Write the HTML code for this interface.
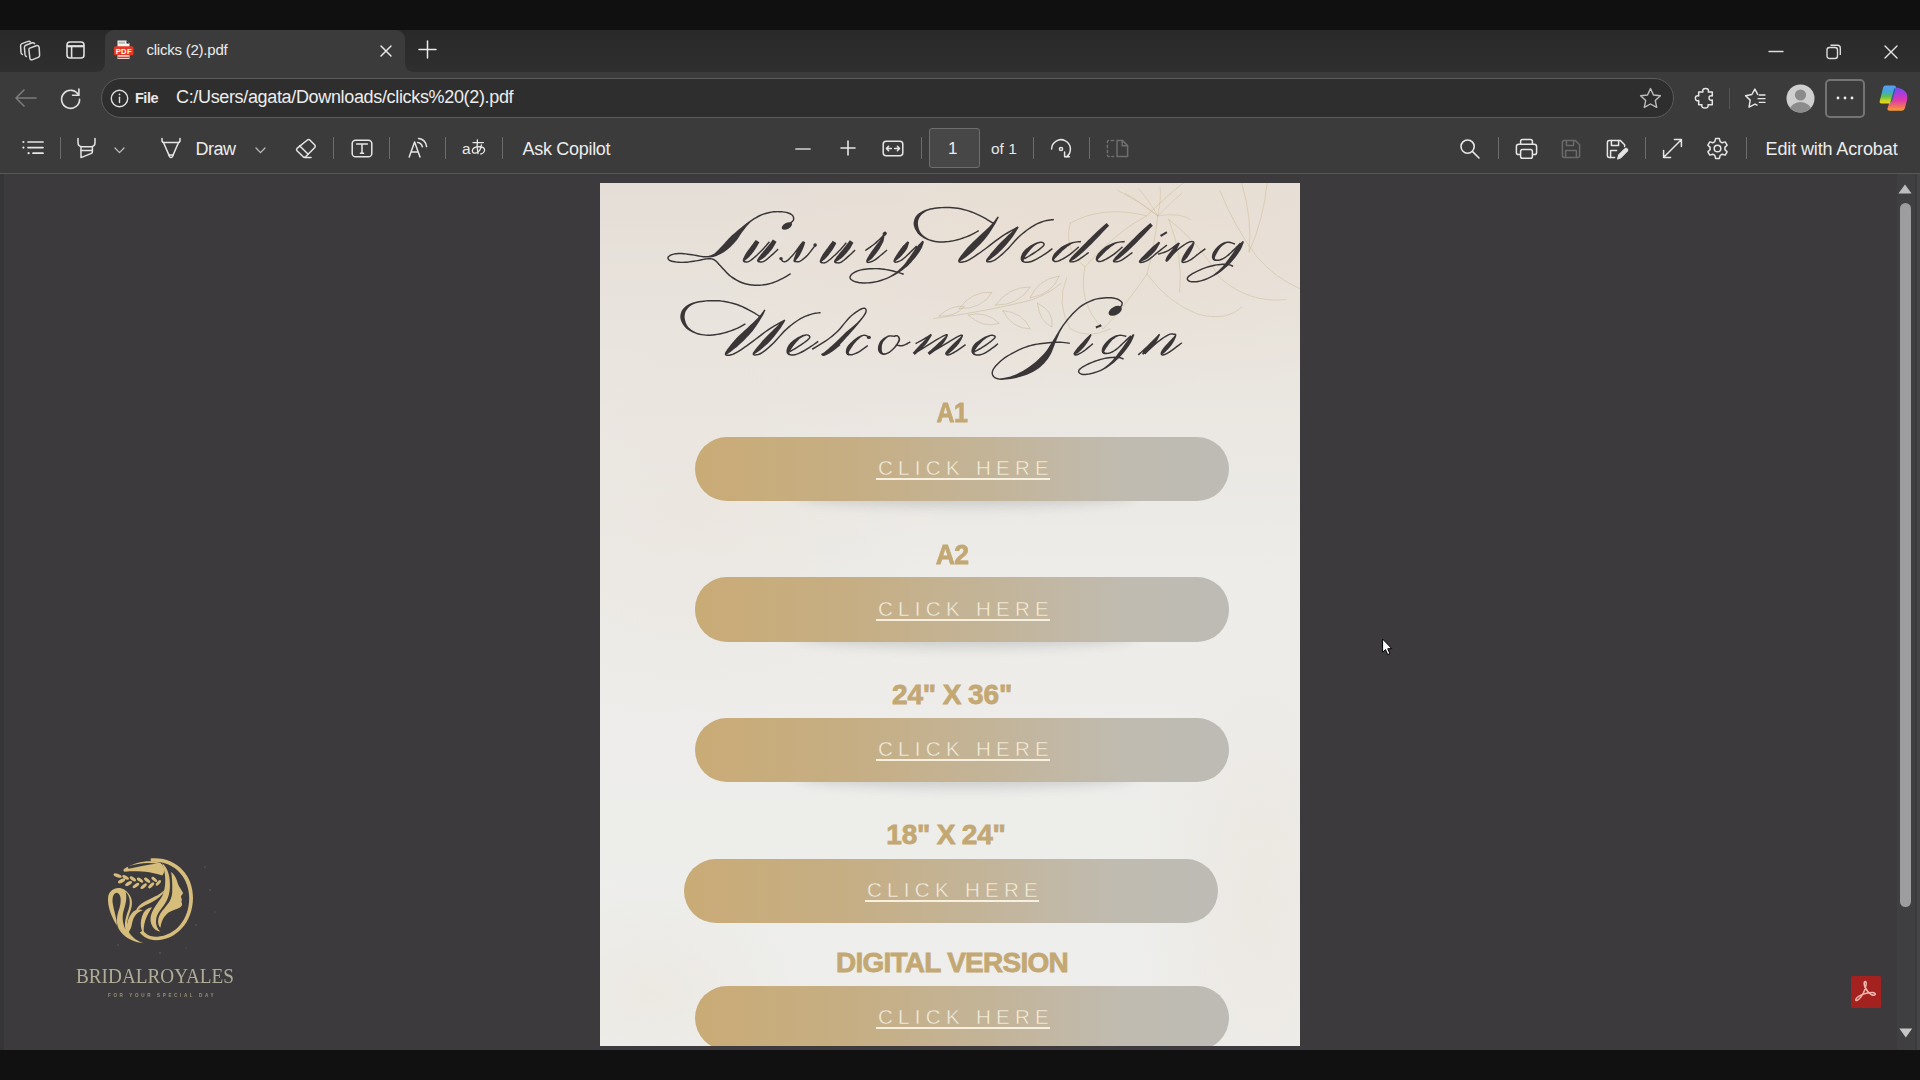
<!DOCTYPE html>
<html>
<head>
<meta charset="utf-8">
<title>clicks (2).pdf</title>
<style>
*{box-sizing:border-box;margin:0;padding:0}
html,body{width:1920px;height:1080px;overflow:hidden;background:#101010;font-family:"Liberation Sans",sans-serif;}
.abs{position:absolute}
#top{left:0;top:0;width:1920px;height:30px;background:#101010}
#tabstrip{left:0;top:30px;width:1920px;height:42px;background:linear-gradient(180deg,#292929,#2f2f2f)}
#tab{left:105px;top:30px;width:300px;height:42px;background:#3b3b3b;border-radius:9px 9px 0 0}
#addr{left:0;top:72px;width:1920px;height:50px;background:#3b3b3b}
#pill{left:101px;top:78px;width:1573px;height:40px;border-radius:20px;background:#2e2e2e;border:1px solid #5c5c5c}
#pdfbar{left:0;top:122px;width:1920px;height:52px;background:#3b3b3b;border-bottom:1px solid #585858}
#content{left:0;top:174px;width:1920px;height:876px;background:#3c3a3d;overflow:hidden}
#bottom{left:0;top:1050px;width:1920px;height:30px;background:#111111}
.t{position:absolute;white-space:nowrap;color:#e6e6e6;line-height:1}
.sep{position:absolute;width:1px;background:#6c6c6c;top:137px;height:22px}
svg{position:absolute;overflow:visible}
#page{left:600px;top:183px;width:700px;height:863px;background:#e8e4df;overflow:hidden}
.btn{position:absolute;height:64px;border-radius:32px;background:linear-gradient(90deg,#c9ab76 0%,#c6ae84 30%,#c3b498 55%,#c0bbb0 80%,#bdbbb5 100%)}
.lbl{position:absolute;white-space:nowrap;font-weight:bold;color:#c3a873;-webkit-text-stroke:0.8px #c3a873;line-height:1;text-align:center}
.ch{position:absolute;white-space:nowrap;color:rgba(250,243,226,0.97);-webkit-text-stroke:0.5px #c4b292;line-height:1;font-size:20.6px;letter-spacing:5.25px}
.shd{position:absolute;width:340px;height:24px;margin-left:20px;border-radius:50%;background:rgba(120,128,128,0.26);filter:blur(6px)}
.ul{position:absolute;height:1.4px;background:#f8f0de}
</style>
</head>
<body>
<div id="top" class="abs"></div>
<div id="tabstrip" class="abs"></div>
<div id="tab" class="abs"></div>
<div id="addr" class="abs"></div>
<div id="pill" class="abs"></div>
<div id="pdfbar" class="abs"></div>
<div id="content" class="abs"></div>
<div id="page" class="abs"></div>
<div id="bottom" class="abs"></div>
<!-- ===== TAB STRIP ===== -->
<svg style="left:405px;top:62px" width="10" height="10"><path d="M0 0 Q0 10 10 10 L0 10 Z" fill="#3b3b3b"/></svg>
<svg style="left:95px;top:62px" width="10" height="10"><path d="M10 0 Q10 10 0 10 L10 10 Z" fill="#3b3b3b"/></svg>
<!-- workspaces icon -->
<svg style="left:19px;top:39px" width="24" height="24" viewBox="0 0 24 24" fill="none" stroke="#d8d8d8" stroke-width="1.5" stroke-linejoin="round" stroke-linecap="round">
<path d="M10.2 9.4 L17.2 6.8 Q19.8 6 20.2 8.6 L20.6 16.2 Q20.7 17.8 19.2 18.4 L13.6 20.6 Q11 21.4 10.8 18.8 L10 11.4 Q9.8 9.9 10.2 9.4 Z"/>
<path d="M7.4 17.6 Q6.2 17.2 6 15.4 L5.4 8.6 Q5.2 6.8 6.8 6.2 L13.2 3.8 Q14.8 3.4 15.6 4.6"/>
<path d="M3.4 15.4 Q2.2 15 2 13.4 L1.6 7 Q1.4 5.2 3 4.6 L9.2 2.4 Q10.6 2 11.4 3"/>
</svg>
<!-- tab actions icon -->
<svg style="left:66px;top:41px" width="19" height="18" viewBox="0 0 19 18" fill="none" stroke="#e0e0e0" stroke-width="1.6">
<rect x="1" y="1" width="17" height="16" rx="3"/><path d="M1 5.2 H18" stroke-width="2.2"/><path d="M5.6 5 V17"/>
</svg>
<!-- pdf favicon -->
<svg style="left:113px;top:40px" width="22" height="20" viewBox="0 0 22 20">
<path d="M4.5 0.5 H13.5 L16.5 3.5 V19 H4.5 Z" fill="#f4f4f4"/>
<path d="M13.5 0.5 V3.5 H16.5 Z" fill="#1a1a1a"/>
<rect x="5.5" y="1.6" width="6.5" height="2.2" fill="#b9b9b9"/>
<rect x="1" y="6.3" width="19.5" height="9" rx="1.6" fill="#e23a24"/>
<rect x="4.5" y="16.6" width="12" height="1.6" fill="#e23a24"/>
<text x="10.8" y="13.6" font-family="Liberation Sans" font-weight="bold" font-size="7.6" fill="#fff" text-anchor="middle" letter-spacing="0.3">PDF</text>
</svg>
<div class="t" id="tabtitle" style="left:146.5px;top:41.8px;font-size:15px;letter-spacing:-0.23px;color:#ececec">clicks (2).pdf</div>
<!-- tab close -->
<svg style="left:380px;top:45px" width="12" height="12" viewBox="0 0 12 12" stroke="#e8e8e8" stroke-width="1.5" stroke-linecap="round"><path d="M1 1 L11 11 M11 1 L1 11"/></svg>
<!-- new tab plus -->
<svg style="left:418px;top:40px" width="19" height="19" viewBox="0 0 19 19" stroke="#ececec" stroke-width="1.5" stroke-linecap="round"><path d="M9.5 1 V18 M1 9.5 H18"/></svg>
<!-- window controls -->
<svg style="left:1768px;top:50px" width="16" height="4" viewBox="0 0 16 4" stroke="#dcdcdc" stroke-width="1.4" stroke-linecap="round"><path d="M1 1.5 H15"/></svg>
<svg style="left:1826px;top:44px" width="16" height="16" viewBox="0 0 16 16" fill="none" stroke="#dcdcdc" stroke-width="1.4" stroke-linejoin="round"><rect x="1" y="3.5" width="10.5" height="11" rx="2.5"/><path d="M4.5 1.2 H11.5 Q14.3 1.2 14.3 4 V11"/></svg>
<svg style="left:1884px;top:45px" width="14" height="14" viewBox="0 0 14 14" stroke="#e6e6e6" stroke-width="1.4" stroke-linecap="round"><path d="M1 1 L13 13 M13 1 L1 13"/></svg>

<!-- ===== ADDRESS BAR ===== -->
<svg style="left:14px;top:88px" width="24" height="20" viewBox="0 0 24 20" fill="none" stroke="#7c7c7c" stroke-width="1.6" stroke-linecap="round" stroke-linejoin="round"><path d="M22 10 H2 M10 2 L2 10 L10 18"/></svg>
<svg style="left:59px;top:86px" width="24" height="24" viewBox="0 0 24 24" fill="none" stroke="#e0e0e0" stroke-width="1.6" stroke-linecap="round" stroke-linejoin="round"><path d="M19.6 9.2 A9 9 0 1 0 20.6 13.2"/><path d="M19.9 3 V9.3 H13.6"/></svg>
<svg style="left:110px;top:89px" width="19" height="19" viewBox="0 0 19 19" fill="none" stroke="#e0e0e0" stroke-width="1.4"><circle cx="9.5" cy="9.5" r="8.2"/><path d="M9.5 8.2 V13.6" stroke-linecap="round"/><circle cx="9.5" cy="5.4" r="0.9" fill="#e0e0e0" stroke="none"/></svg>
<div class="t" id="filelbl" style="left:135px;top:91px;font-size:14.5px;letter-spacing:-0.5px;font-weight:bold;color:#e8e8e8">File</div>
<div class="t" id="url" style="left:176px;top:88px;font-size:18px;letter-spacing:-0.34px;color:#ededed">C:/Users/agata/Downloads/clicks%20(2).pdf</div>
<!-- star -->
<svg style="left:1639px;top:87px" width="23" height="22" viewBox="0 0 23 22" fill="none" stroke="#bdbdbd" stroke-width="1.4" stroke-linejoin="round"><path d="M11.5 1.6 L14.5 8 L21.4 8.8 L16.3 13.6 L17.7 20.4 L11.5 17 L5.3 20.4 L6.7 13.6 L1.6 8.8 L8.5 8 Z"/></svg>
<!-- extensions puzzle -->
<svg style="left:0;top:0" width="1920" height="130" viewBox="0 0 1920 130"><g transform="translate(1685,78) scale(0.04688)" fill="none" stroke="#e6e6e6" stroke-width="32" stroke-linejoin="round"><path d="M292 300 H382 Q366 222 440 222 Q514 222 498 300 H582 V382 Q512 366 512 426 Q512 486 582 470 V572 H492 Q506 640 426 640 Q346 640 360 572 H292 V482 Q222 496 222 432 Q222 368 292 382 Z"/></g></svg>
<div class="sep" style="left:1729px;top:88px;height:21px;background:#555"></div>
<!-- favorites -->
<svg style="left:0;top:0" width="1920" height="130" viewBox="0 0 1920 130"><g transform="translate(1685,78) scale(0.04688)" fill="none" stroke="#e6e6e6" stroke-width="31" stroke-linejoin="round" stroke-linecap="round"><path d="M1550 350 L1490 236 L1426 352 L1292 378 L1390 472 L1366 622 L1494 556 L1536 580"/><path d="M1585 362 H1705 M1560 440 H1705 M1585 520 H1705"/></g></svg>
<!-- profile -->
<svg style="left:1786px;top:84px" width="29" height="29" viewBox="0 0 29 29"><defs><clipPath id="pc"><circle cx="14.5" cy="14.5" r="14"/></clipPath></defs><circle cx="14.5" cy="14.5" r="14" fill="#cfcfcf"/><g clip-path="url(#pc)"><circle cx="14.5" cy="11" r="5.6" fill="#8b8b8b"/><ellipse cx="14.5" cy="27" rx="11" ry="9" fill="#8b8b8b"/></g></svg>
<!-- more box -->
<div class="abs" style="left:1825px;top:79px;width:40px;height:39px;border:2px solid #747474;border-radius:5px;background:#3b3b3b"></div>
<svg style="left:1836px;top:96px" width="18" height="4" viewBox="0 0 18 4" fill="#ececec"><circle cx="2" cy="2" r="1.4"/><circle cx="9" cy="2" r="1.4"/><circle cx="16" cy="2" r="1.4"/></svg>
<!-- copilot -->
<svg style="left:0;top:0" width="1920" height="130" viewBox="0 0 1920 130">
<defs>
<linearGradient id="cgl" x1="0" y1="0" x2="0" y2="1"><stop offset="0" stop-color="#5b9df0"/><stop offset="0.35" stop-color="#3fa6d8"/><stop offset="0.6" stop-color="#5cbf52"/><stop offset="0.85" stop-color="#c9d421"/><stop offset="1" stop-color="#ecd51f"/></linearGradient>
<linearGradient id="cgr" x1="0" y1="0" x2="0" y2="1"><stop offset="0" stop-color="#6c4fe6"/><stop offset="0.3" stop-color="#b53ad8"/><stop offset="0.55" stop-color="#e03aa8"/><stop offset="0.78" stop-color="#ee6a6a"/><stop offset="1" stop-color="#f7a02c"/></linearGradient>
</defs>
<path d="M1896.2 87.6 Q1904 88.6 1906.6 93.6 Q1908 96.4 1907.2 99.6 L1904.8 108.4 Q1904 110.8 1901.4 110.8 H1889.6 Q1886.8 110.8 1887.6 108 L1889.6 101.6 L1893.6 88.4 Z" fill="url(#cgr)"/>
<path d="M1885.4 85.4 H1893.8 Q1896.4 85.4 1895.8 88 L1892.2 101.6 Q1891.6 103.4 1889.6 103.4 H1881.6 Q1879 103.4 1879.8 100.8 L1883.2 87.2 Q1883.8 85.4 1885.4 85.4 Z" fill="url(#cgl)"/>
<path d="M1895.6 88.8 L1892.2 101.8 L1890 103.2 L1894.4 88 Z" fill="#2a3aa8" opacity="0.75"/>
</svg>
<!-- ===== PDF TOOLBAR ===== -->
<!-- contents -->
<svg style="left:21px;top:139px" width="24" height="18" viewBox="0 0 24 18" stroke="#e6e6e6" stroke-width="1.7" stroke-linecap="round" fill="#e6e6e6"><circle cx="2.4" cy="3" r="1.1" stroke="none"/><circle cx="2.4" cy="8.6" r="1.1" stroke="none"/><circle cx="7.6" cy="14.2" r="1.1" stroke="none"/><path d="M7 3 H22 M7 8.6 H22 M12 14.2 H22"/></svg>
<div class="sep" style="left:60px"></div>
<!-- highlighter -->
<svg style="left:76px;top:137px" width="21" height="23" viewBox="0 0 21 23" fill="none" stroke="#e6e6e6" stroke-width="1.5" stroke-linejoin="round" stroke-linecap="round"><path d="M2 1.6 V5.6 Q2 9.6 6 9.8 H15 Q19 9.6 19 5.6 V1.6"/><path d="M5 10 V20.6 L15.4 16.4 Q16.4 16 16.4 14.8 V10"/><path d="M5 13.6 H16.4"/></svg>
<svg style="left:114px;top:147px" width="11" height="7" viewBox="0 0 11 7" fill="none" stroke="#bdbdbd" stroke-width="1.3" stroke-linecap="round" stroke-linejoin="round"><path d="M1 1 L5.5 5.6 L10 1"/></svg>
<!-- draw -->
<svg style="left:160px;top:137px" width="22" height="23" viewBox="0 0 22 23" fill="none" stroke="#e6e6e6" stroke-width="1.5" stroke-linejoin="round" stroke-linecap="round"><path d="M2 1.6 V3.4 Q2 5.6 4.4 5.6 H17.6 Q20 5.6 20 3.4 V1.6"/><path d="M3.6 5.8 L9.6 19.6 Q11 21.6 12.4 19.6 L18.4 5.8"/><path d="M9 18 H13"/></svg>
<div class="t" id="drawlbl" style="left:195.5px;top:139.6px;font-size:18px;letter-spacing:-0.5px;color:#ececec">Draw</div>
<svg style="left:255px;top:147px" width="11" height="7" viewBox="0 0 11 7" fill="none" stroke="#bdbdbd" stroke-width="1.3" stroke-linecap="round" stroke-linejoin="round"><path d="M1 1 L5.5 5.6 L10 1"/></svg>
<!-- eraser -->
<svg style="left:295px;top:138px" width="22" height="22" viewBox="0 0 22 22" fill="none" stroke="#e6e6e6" stroke-width="1.5" stroke-linejoin="round" stroke-linecap="round"><path d="M12.4 2 Q13.6 1 14.8 2 L19.8 7 Q20.8 8.2 19.8 9.4 L10.6 18.8 Q9.4 19.8 8.2 18.8 L2 12.8 Q1 11.6 2 10.4 Z"/><path d="M4.6 7.8 L13.2 16.2"/><path d="M9.6 19.6 H16"/></svg>
<div class="sep" style="left:333px"></div>
<!-- text box -->
<svg style="left:351px;top:139px" width="22" height="19" viewBox="0 0 22 19" fill="none" stroke="#e6e6e6" stroke-width="1.5" stroke-linejoin="round" stroke-linecap="round"><rect x="1.2" y="1.2" width="19.6" height="16.6" rx="3.4"/><path d="M5.6 5 H16.4 M11 5 V14.2 M9.4 14.2 H12.6"/></svg>
<div class="sep" style="left:389px"></div>
<!-- read aloud -->
<svg style="left:408px;top:137px" width="21" height="22" viewBox="0 0 21 22" fill="none" stroke="#e6e6e6" stroke-width="1.5" stroke-linejoin="round" stroke-linecap="round"><path d="M1.2 20 L6.6 5 L12 20 M3 15 H10.2"/><path d="M9.6 5.4 Q13.4 5.8 14.4 9.8"/><path d="M10.6 1.6 Q17.4 2.4 18.6 9.6"/></svg>
<div class="sep" style="left:445px"></div>
<!-- translate -->
<div class="t" style="left:462px;top:141px;font-size:15.5px;color:#e8e8e8">a</div>
<svg style="left:471px;top:139px" width="15" height="16" viewBox="0 0 15 16" fill="none" stroke="#e8e8e8" stroke-width="1.3" stroke-linecap="round" stroke-linejoin="round"><path d="M2 3.6 H12.4"/><path d="M6.4 0.8 Q5.6 8 7 14.6"/><path d="M10.4 6 Q9.4 13.4 4.2 14.2 Q1 14.2 1.4 11.2 Q2.4 7.8 8 7.6 Q13.4 7.8 13.6 11 Q13.4 14 9.8 15"/></svg>
<div class="sep" style="left:502px"></div>
<div class="t" id="askcop" style="left:522.5px;top:139.6px;font-size:18px;letter-spacing:-0.3px;color:#ececec">Ask Copilot</div>

<!-- zoom -->
<svg style="left:795px;top:147px" width="16" height="4" viewBox="0 0 16 4" stroke="#d4d4d4" stroke-width="1.7" stroke-linecap="round"><path d="M1 2 H15"/></svg>
<svg style="left:840px;top:140px" width="16" height="16" viewBox="0 0 16 16" stroke="#e6e6e6" stroke-width="1.6" stroke-linecap="round"><path d="M8 1 V15 M1 8 H15"/></svg>
<!-- fit width -->
<svg style="left:882px;top:140px" width="22" height="17" viewBox="0 0 22 17" fill="none" stroke="#e6e6e6" stroke-width="1.5" stroke-linejoin="round" stroke-linecap="round"><rect x="1.2" y="1.2" width="19.6" height="14.6" rx="3"/><path d="M4.6 8.5 H9.4 M6.6 6.2 L4.4 8.5 L6.6 10.8 M12.6 8.5 H17.4 M15.4 6.2 L17.6 8.5 L15.4 10.8"/></svg>
<div class="sep" style="left:921px"></div>
<div class="abs" style="left:929px;top:128px;width:51px;height:40px;background:#474747;border:1px solid #6e6e6e;border-radius:3px"></div>
<div class="t" style="left:948px;top:140px;font-size:17px;color:#ececec">1</div>
<div class="t" id="ofone" style="left:991px;top:141px;font-size:15.5px;color:#e6e6e6">of 1</div>
<div class="sep" style="left:1033px"></div>
<!-- rotate -->
<svg style="left:1049px;top:137px" width="24" height="24" viewBox="0 0 24 24" fill="none" stroke="#e6e6e6" stroke-width="1.5" stroke-linejoin="round" stroke-linecap="round"><path d="M2.6 12 A9.4 9.4 0 1 1 17.4 19.8"/><path d="M20.4 19.8 H15.6 V15"/><circle cx="12" cy="12" r="1.6"/></svg>
<div class="sep" style="left:1089px"></div>
<!-- page view dimmed -->
<svg style="left:1106px;top:139px" width="23" height="19" viewBox="0 0 23 19" fill="none" stroke="#6e6e6e" stroke-width="1.5" stroke-linejoin="round" stroke-linecap="round"><path d="M11 1.4 H16.4 L21.6 6.6 V17.6 H11 Z"/><path d="M16.2 1.6 V6.8 H21.4"/><path d="M7.6 1.4 H3 Q1.4 1.4 1.4 3 V16 Q1.4 17.6 3 17.6 H7.6" stroke-dasharray="2.4 2.6"/></svg>

<!-- right tools -->
<svg style="left:1459px;top:138px" width="22" height="22" viewBox="0 0 22 22" fill="none" stroke="#e6e6e6" stroke-width="1.6" stroke-linecap="round"><circle cx="8.6" cy="8.6" r="6.6"/><path d="M13.6 13.6 L20 20"/></svg>
<div class="sep" style="left:1498px"></div>
<!-- print -->
<svg style="left:1515px;top:138px" width="23" height="22" viewBox="0 0 23 22" fill="none" stroke="#e6e6e6" stroke-width="1.5" stroke-linejoin="round" stroke-linecap="round"><path d="M5.6 6 V3.4 Q5.6 1.6 7.4 1.6 H15.6 Q17.4 1.6 17.4 3.4 V6"/><path d="M5.4 16.6 H3.6 Q1.4 16.6 1.4 14.4 V8.6 Q1.4 6.2 3.8 6.2 H19.2 Q21.6 6.2 21.6 8.6 V14.4 Q21.6 16.6 19.4 16.6 H17.6"/><rect x="5.6" y="11.6" width="11.8" height="8.6" rx="1.8"/></svg>
<!-- save dimmed -->
<svg style="left:1561px;top:139px" width="20" height="20" viewBox="0 0 20 20" fill="none" stroke="#6a6a6a" stroke-width="1.5" stroke-linejoin="round" stroke-linecap="round"><path d="M3.4 1.4 H14.2 L18.6 5.8 V16.6 Q18.6 18.6 16.6 18.6 H3.4 Q1.4 18.6 1.4 16.6 V3.4 Q1.4 1.4 3.4 1.4 Z"/><path d="M5.4 1.6 V6.4 H12.6 V1.6"/><path d="M4.6 18.4 V11.4 H15.4 V18.4"/></svg>
<!-- save as -->
<svg style="left:1606px;top:138px" width="23" height="22" viewBox="0 0 23 22" fill="none" stroke="#e6e6e6" stroke-width="1.5" stroke-linejoin="round" stroke-linecap="round"><path d="M8.6 19.6 H3.4 Q1.4 19.6 1.4 17.6 V4.4 Q1.4 2.4 3.4 2.4 H14.2 L18.6 6.8 V8.6"/><path d="M5.4 2.6 V7.4 H12.6 V2.6"/><path d="M4.6 19.4 V12.4 H10.6"/><path d="M11.6 20.8 L12.6 16.8 L18.8 10.6 Q20.2 9.6 21.4 10.8 Q22.4 12 21.4 13.2 L15.2 19.6 Z" fill="#e6e6e6" stroke-width="1"/></svg>
<div class="sep" style="left:1645px"></div>
<!-- fullscreen -->
<svg style="left:1662px;top:138px" width="21" height="21" viewBox="0 0 21 21" fill="none" stroke="#e6e6e6" stroke-width="1.5" stroke-linejoin="round" stroke-linecap="round"><path d="M2 19 L19 2 M12.4 1.6 H19.4 V8.6 M8.6 19.4 H1.6 V12.4"/></svg>
<!-- settings gear -->
<svg style="left:1706px;top:137px" width="23" height="23" viewBox="0 0 23 23" fill="none" stroke="#e6e6e6" stroke-width="1.5" stroke-linejoin="round"><circle cx="11.5" cy="11.5" r="3.3"/><path d="M9.6 1.6 H13.4 L14.2 4.6 L16.2 5.8 L19.2 4.9 L21.1 8.2 L18.9 10.4 V12.6 L21.1 14.8 L19.2 18.1 L16.2 17.2 L14.2 18.4 L13.4 21.4 H9.6 L8.8 18.4 L6.8 17.2 L3.8 18.1 L1.9 14.8 L4.1 12.6 V10.4 L1.9 8.2 L3.8 4.9 L6.8 5.8 L8.8 4.6 Z"/></svg>
<div class="sep" style="left:1746px"></div>
<div class="t" id="ewa" style="left:1765.5px;top:139.5px;font-size:18px;letter-spacing:-0.12px;color:#ececec">Edit with Acrobat</div>


<!--CHROME_END-->
<div id="pagein" class="abs" style="left:600px;top:183px;width:700px;height:863px;overflow:hidden;
background:
radial-gradient(ellipse 420px 170px at 500px 40px, rgba(234,222,210,0.75), rgba(234,222,210,0) 100%),
radial-gradient(ellipse 240px 200px at 90px 330px, rgba(234,227,219,0.6), rgba(234,227,219,0) 100%),
radial-gradient(ellipse 220px 140px at 300px 120px, rgba(234,227,220,0.6), rgba(234,227,220,0) 100%),
radial-gradient(ellipse 120px 270px at 660px 720px, rgba(235,228,219,0.6), rgba(235,228,219,0) 100%),
radial-gradient(ellipse 150px 110px at 50px 810px, rgba(235,230,221,0.6), rgba(235,230,221,0) 100%),
linear-gradient(180deg,#e5ded7 0%,#e8e3dc 14%,#ebe8e3 30%,#edece9 45%,#eeeeec 100%)">
<!--FLORAL_START--><svg style="left:0;top:0" width="700" height="863" viewBox="0 0 700 863" fill="none" stroke-linecap="round" stroke-linejoin="round">
<g transform="scale(0.36458)">
<!-- leaf branch outlines -->
<g stroke="rgba(186,172,130,0.42)" stroke-width="2.7">
<path d="M915 372 Q1060 352 1180 322 Q1230 305 1265 275"/>
<path d="M930 365 Q960 335 1000 338 Q975 368 930 365 Z"/>
<path d="M985 345 Q1020 295 1075 300 Q1050 345 985 345 Z"/>
<path d="M1010 362 Q1050 400 1095 385 Q1060 350 1010 362 Z"/>
<path d="M1085 335 Q1120 285 1180 285 Q1150 335 1085 335 Z"/>
<path d="M1105 350 Q1130 400 1180 400 Q1160 355 1105 350 Z"/>
<path d="M1180 315 Q1200 265 1260 255 Q1240 305 1180 315 Z"/>
<path d="M1200 330 Q1205 380 1240 395 Q1245 350 1200 330 Z"/>
</g>
<!-- lily outlines -->
<g stroke="rgba(196,180,128,0.42)" stroke-width="2.7">
<path d="M1290 110 Q1380 60 1500 90 Q1420 130 1330 230 Q1270 180 1290 110 Z"/>
<path d="M1330 230 Q1310 330 1380 400 Q1440 340 1500 250"/>
<path d="M1500 90 Q1560 30 1600 0"/>
<path d="M1560 100 Q1640 160 1700 260 Q1780 330 1880 320"/>
<path d="M1700 20 Q1740 120 1800 200 Q1850 260 1920 290"/>
<path d="M1420 20 Q1480 50 1530 90"/>
<path d="M1760 0 Q1790 100 1780 190 Q1820 100 1830 0"/>
<path d="M1500 250 Q1560 330 1640 360 Q1720 380 1760 340"/>
<path d="M1280 260 Q1250 330 1290 400 Q1340 430 1400 400"/>
<path d="M1530 90 Q1520 180 1500 250"/>
<path d="M1560 100 Q1600 200 1590 300"/>
</g>
<g stroke="rgba(200,186,140,0.5)" stroke-width="2.2">
<path d="M1530 90 Q1480 50 1440 28"/><path d="M1530 90 Q1500 40 1478 16"/><path d="M1530 90 Q1570 50 1596 28"/><path d="M1530 90 Q1590 80 1620 100"/><path d="M1530 90 Q1540 40 1536 10"/>
</g>
</g>
</svg>
<!--FLORAL_END-->
<!--TITLE-->
<!-- labels -->
<div class="lbl" id="l1" style="left:252px;width:200px;top:216px;font-size:28px;letter-spacing:-0.6px;transform:scaleX(0.89)">A1</div>
<div class="lbl" id="l2" style="left:252px;width:200px;top:358px;font-size:28px;letter-spacing:-0.8px;transform:scaleX(0.95)">A2</div>
<div class="lbl" id="l3" style="left:202px;width:300px;top:498px;font-size:28px;letter-spacing:-0.1px;word-spacing:-1px">24" X 36"</div>
<div class="lbl" id="l4" style="left:196px;width:300px;top:638px;font-size:28px;letter-spacing:-0.2px;word-spacing:-1px">18" X 24"</div>
<div class="lbl" id="l5" style="left:152px;width:400px;top:766px;font-size:28px;letter-spacing:-0.75px">DIGITAL VERSION</div>
<!-- button shadows -->
<div class="shd" style="left:175px;top:300px"></div>
<div class="shd" style="left:175px;top:441px"></div>
<div class="shd" style="left:175px;top:581px"></div>

<!-- buttons -->
<div class="btn" style="left:95px;top:254px;width:534px"></div>
<div class="btn" style="left:95px;top:394px;width:534px;height:65px"></div>
<div class="btn" style="left:95px;top:535px;width:534px"></div>
<div class="btn" style="left:84px;top:676px;width:534px"></div>
<div class="btn" style="left:95px;top:803px;width:534px"></div>
<!-- click here -->
<div class="ch" id="c1" style="left:278px;top:275px">CLICK HERE</div><div class="ul" style="left:276px;top:295.2px;width:174px"></div>
<div class="ch" id="c2" style="left:278px;top:416px">CLICK HERE</div><div class="ul" style="left:276px;top:436.2px;width:174px"></div>
<div class="ch" id="c3" style="left:278px;top:556px">CLICK HERE</div><div class="ul" style="left:276px;top:576.2px;width:174px"></div>
<div class="ch" id="c4" style="left:267px;top:697px">CLICK HERE</div><div class="ul" style="left:265px;top:717.2px;width:174px"></div>
<div class="ch" id="c5" style="left:278px;top:824px">CLICK HERE</div><div class="ul" style="left:276px;top:844.2px;width:174px"></div>
</div>

<!--PAGECONTENT_END-->
<!--TITLE_SVG_START--><svg class="abs" style="left:0;top:0" width="1920" height="1080" viewBox="0 0 1920 1080" fill="#3a3537"><path d="M788.8 225.2L789.4 224.7L790.3 224.0L791.4 223.2L792.5 222.3L793.5 221.3L794.1 220.3L794.4 219.2L794.4 218.2L794.2 217.2L793.8 216.1L793.3 215.2L792.5 214.4L791.6 213.7L790.5 213.1L789.2 212.5L787.8 212.1L786.3 211.7L784.7 211.4L783.1 211.2L781.3 211.0L779.4 210.9L777.4 210.9L775.4 211.0L773.4 211.1L771.4 211.4L769.4 211.8L767.3 212.3L765.3 212.8L763.2 213.5L761.2 214.2L759.2 215.1L757.3 216.1L755.4 217.2L753.5 218.3L751.7 219.5L749.9 220.8L748.1 222.0L746.4 223.3L744.6 224.7L742.9 226.0L741.3 227.4L739.6 228.8L738.0 230.1L736.4 231.5L734.8 232.9L733.2 234.3L731.7 235.6L730.2 237.1L728.7 238.6L727.2 240.2L725.7 241.8L724.3 243.4L722.9 245.0L721.5 246.4L720.2 247.8L718.9 249.2L717.6 250.6L716.3 251.8L715.0 252.9L713.7 253.9L712.3 254.6L711.0 255.2L709.7 255.6L708.3 255.9L706.7 256.1L705.0 256.1L703.1 256.0L701.0 255.7L698.8 255.3L696.6 254.8L694.3 254.4L692.1 254.0L690.0 253.7L687.9 253.4L685.8 253.2L683.8 253.0L681.8 252.8L680.0 252.8L678.3 252.8L676.7 252.9L675.2 253.1L673.8 253.4L672.5 253.7L671.4 254.0L670.4 254.5L669.4 255.0L668.6 255.7L667.9 256.3L667.4 257.1L667.2 257.9L667.4 258.8L667.8 259.5L668.4 260.2L669.2 260.9L670.2 261.4L671.5 261.9L672.9 262.3L674.6 262.6L676.6 262.8L678.6 263.0L680.7 263.1L682.8 263.1L684.9 263.0L687.1 262.9L689.4 262.6L691.6 262.3L693.8 262.0L695.9 261.6L697.9 261.3L699.9 260.9L701.8 260.5L703.6 260.1L705.3 259.8L706.9 259.6L708.3 259.5L709.6 259.5L710.7 259.5L711.8 259.6L712.8 259.9L713.9 260.4L715.0 261.2L716.2 262.3L717.3 263.5L718.5 264.9L719.8 266.3L721.1 267.7L722.5 269.2L724.0 270.8L725.5 272.4L727.0 274.1L728.7 275.7L730.5 277.1L732.3 278.4L734.3 279.7L736.3 280.8L738.4 281.9L740.5 282.9L742.7 283.7L745.0 284.4L747.3 284.9L749.7 285.4L752.1 285.7L754.5 285.9L756.8 286.0L759.2 286.0L761.6 285.8L764.0 285.5L766.4 285.2L768.7 284.7L770.9 284.1L773.1 283.4L775.3 282.6L777.4 281.7L779.5 280.8L781.4 279.8L783.1 279.0L784.8 278.1L786.4 277.2L787.8 276.3L789.1 275.5L790.2 274.8L791.0 274.3L790.3 273.1L789.5 273.6L788.4 274.3L787.1 275.1L785.6 276.0L784.1 276.8L782.5 277.7L780.7 278.5L778.8 279.5L776.8 280.4L774.8 281.3L772.7 282.1L770.5 282.7L768.4 283.3L766.1 283.7L763.8 284.1L761.5 284.4L759.2 284.5L756.9 284.5L754.6 284.4L752.2 284.2L749.9 283.9L747.6 283.5L745.4 282.9L743.2 282.2L741.1 281.4L739.0 280.5L737.0 279.5L735.1 278.3L733.2 277.1L731.4 275.9L729.7 274.5L728.1 273.0L726.6 271.4L725.1 269.8L723.6 268.2L722.2 266.7L720.9 265.3L719.6 263.9L718.4 262.5L717.2 261.2L715.9 260.1L714.6 259.2L713.3 258.6L712.1 258.2L710.8 258.0L709.6 258.0L708.3 258.1L706.8 258.2L705.1 258.3L703.4 258.7L701.5 259.0L699.6 259.5L697.6 259.9L695.6 260.2L693.6 260.5L691.4 260.8L689.2 261.2L687.0 261.4L684.8 261.6L682.8 261.7L680.8 261.7L678.7 261.6L676.7 261.4L674.9 261.1L673.2 260.8L671.9 260.5L670.8 260.1L670.0 259.7L669.4 259.2L669.0 258.7L668.7 258.3L668.7 258.0L668.8 257.7L669.0 257.3L669.5 256.8L670.2 256.3L671.0 255.8L671.9 255.4L672.9 255.1L674.1 254.8L675.4 254.6L676.8 254.4L678.4 254.3L680.0 254.2L681.7 254.3L683.6 254.4L685.6 254.6L687.7 254.9L689.8 255.2L691.9 255.4L694.1 255.8L696.3 256.2L698.6 256.7L700.8 257.1L703.0 257.4L705.0 257.6L706.8 257.6L708.4 257.6L710.0 257.5L711.6 257.3L713.2 257.0L714.9 256.5L716.6 255.9L718.4 255.1L720.2 254.2L722.0 253.3L723.8 252.2L725.5 251.0L727.2 249.7L729.0 248.2L730.7 246.7L732.3 245.1L733.9 243.5L735.3 241.8L736.7 240.2L738.0 238.4L739.1 236.7L740.2 235.0L741.4 233.3L742.6 231.6L743.9 229.9L745.2 228.2L746.5 226.6L747.9 224.9L749.3 223.4L750.8 222.0L752.5 220.7L754.3 219.5L756.1 218.4L758.0 217.4L759.9 216.4L761.8 215.6L763.7 214.8L765.7 214.2L767.7 213.7L769.7 213.2L771.7 212.8L773.6 212.6L775.5 212.4L777.4 212.3L779.3 212.4L781.2 212.5L782.9 212.6L784.5 212.8L786.0 213.1L787.4 213.5L788.7 213.9L789.8 214.4L790.8 214.9L791.6 215.4L792.1 216.1L792.5 216.8L792.8 217.5L792.9 218.3L792.9 219.1L792.8 219.7L792.3 220.4L791.5 221.2L790.5 222.1L789.5 222.9L788.5 223.6L787.9 224.1ZM755.8 239.9L755.3 240.6L754.6 241.5L753.7 242.6L752.8 243.9L751.9 245.1L751.0 246.3L750.1 247.4L749.2 248.7L748.2 250.0L747.3 251.3L746.4 252.5L745.7 253.7L745.0 254.8L744.4 255.9L743.9 257.0L743.4 258.0L743.0 259.0L742.8 259.9L742.8 260.7L743.0 261.5L743.5 262.1L744.1 262.4L744.6 262.5L745.1 262.6L745.7 262.7L746.3 262.7L747.0 262.7L747.9 262.6L748.8 262.3L749.8 261.8L750.9 261.1L752.1 260.2L753.4 259.2L754.7 258.0L756.1 256.9L757.3 255.7L758.6 254.5L759.9 253.3L761.2 252.0L762.5 250.7L763.7 249.4L764.8 248.3L765.8 247.1L766.9 245.9L767.8 244.8L768.7 243.7L769.4 242.9L769.9 242.2L768.8 241.3L768.3 241.9L767.6 242.8L766.7 243.8L765.8 245.0L764.8 246.1L763.7 247.3L762.6 248.4L761.4 249.7L760.2 251.0L758.9 252.2L757.6 253.5L756.4 254.7L755.1 255.8L753.8 256.9L752.5 258.1L751.2 259.1L750.1 259.9L749.1 260.6L748.3 261.0L747.6 261.2L746.9 261.3L746.4 261.3L745.9 261.2L745.4 261.1L745.0 261.0L744.8 260.9L744.7 260.8L744.7 260.8L744.8 260.8L745.0 260.7L745.3 260.3L746.0 259.8L746.7 259.2L747.6 258.5L748.6 257.6L749.5 256.7L750.4 255.6L751.4 254.4L752.4 253.2L753.4 251.9L754.4 250.6L755.3 249.3L756.1 248.0L757.0 246.6L757.7 245.2L758.4 244.0L759.0 242.9L759.4 242.2ZM772.9 239.4L772.4 240.1L771.6 241.2L770.7 242.4L769.7 243.7L768.7 245.0L767.7 246.2L766.8 247.3L765.7 248.6L764.6 249.9L763.5 251.1L762.5 252.4L761.6 253.5L760.7 254.6L759.9 255.7L759.1 256.8L758.3 257.8L757.7 258.8L757.2 259.7L757.0 260.6L757.2 261.5L757.8 262.1L758.4 262.4L759.0 262.5L759.5 262.6L760.1 262.7L760.8 262.7L761.6 262.7L762.5 262.6L763.5 262.3L764.6 261.8L765.8 261.1L767.0 260.2L768.3 259.1L769.6 257.9L770.9 256.8L772.1 255.7L773.4 254.7L774.6 253.5L775.9 252.3L777.0 251.3L778.0 250.3L778.6 249.7L777.7 248.6L777.0 249.3L776.0 250.2L774.9 251.3L773.6 252.4L772.4 253.6L771.2 254.6L770.0 255.7L768.7 256.8L767.4 258.0L766.1 259.0L764.9 259.9L763.9 260.6L763.0 261.0L762.2 261.2L761.5 261.3L760.9 261.3L760.3 261.2L759.7 261.1L759.3 261.0L759.0 260.9L758.9 260.8L759.0 260.8L759.1 260.9L759.3 260.9L759.7 260.5L760.5 260.0L761.5 259.4L762.7 258.7L763.9 257.8L765.1 256.9L766.2 255.8L767.4 254.6L768.6 253.4L769.7 252.0L770.8 250.7L771.9 249.4L772.9 248.0L773.8 246.5L774.7 245.0L775.4 243.7L776.1 242.5L776.5 241.7ZM780.6 259.2L780.7 259.5L780.9 260.0L781.2 260.5L781.6 261.2L782.1 261.7L782.7 262.1L783.4 262.3L784.1 262.4L784.8 262.4L785.7 262.3L786.6 261.9L787.6 261.3L788.7 260.4L790.0 259.2L791.3 257.8L792.6 256.4L793.9 255.0L795.0 253.6L796.1 252.2L797.2 250.8L798.2 249.4L799.1 248.0L800.0 246.8L800.8 245.8L801.5 244.9L802.1 244.2L802.6 243.6L803.1 243.2L803.5 242.8L803.9 242.4L802.8 241.4L802.5 241.7L802.1 242.1L801.6 242.6L801.0 243.2L800.4 244.0L799.6 244.9L798.8 245.9L798.0 247.2L797.0 248.5L796.0 250.0L795.0 251.3L793.9 252.7L792.8 254.0L791.5 255.4L790.2 256.8L788.9 258.2L787.8 259.3L786.8 260.1L786.0 260.6L785.3 260.9L784.7 261.0L784.2 261.0L783.7 260.9L783.3 260.8L783.0 260.6L782.8 260.3L782.5 259.9L782.2 259.3L782.0 258.9L781.8 258.5ZM802.9 241.0L802.5 241.5L802.0 242.3L801.3 243.3L800.7 244.3L800.0 245.4L799.3 246.4L798.7 247.6L798.1 248.8L797.4 250.0L796.8 251.3L796.2 252.5L795.7 253.7L795.2 254.9L794.8 256.1L794.3 257.3L793.9 258.4L793.6 259.5L793.4 260.4L793.5 261.2L793.9 262.0L794.6 262.3L795.1 262.3L795.6 262.3L796.0 262.3L796.4 262.4L797.0 262.5L797.7 262.5L798.6 262.5L799.5 262.3L800.6 261.8L801.7 261.1L802.9 260.2L804.2 259.2L805.6 258.1L806.8 256.9L808.0 255.7L809.1 254.5L810.2 253.1L811.3 251.8L812.2 250.5L813.1 249.3L813.8 248.4L814.4 247.7L814.8 247.1L815.2 246.7L815.5 246.4L815.8 246.1L816.0 245.9L814.9 244.9L814.7 245.1L814.5 245.4L814.1 245.7L813.8 246.2L813.3 246.7L812.7 247.5L811.9 248.4L811.1 249.6L810.1 250.9L809.1 252.2L808.0 253.5L807.0 254.7L805.8 255.8L804.6 257.0L803.3 258.1L802.0 259.1L800.9 259.9L799.9 260.6L799.1 260.9L798.4 261.1L797.8 261.1L797.2 261.0L796.7 260.9L796.1 260.8L795.6 260.8L795.2 260.8L795.0 260.7L795.2 260.8L795.4 261.0L795.5 260.9L795.9 260.5L796.4 259.8L797.1 258.9L797.9 257.9L798.8 256.8L799.5 255.7L800.2 254.5L800.8 253.3L801.5 252.0L802.1 250.8L802.6 249.5L803.2 248.3L803.6 247.2L804.1 246.0L804.5 244.8L804.8 243.7L805.1 242.8L805.3 242.2ZM832.7 240.8L832.2 241.5L831.5 242.4L830.7 243.6L829.7 244.8L828.8 246.0L827.9 247.2L827.1 248.4L826.1 249.6L825.2 250.9L824.2 252.2L823.3 253.5L822.6 254.6L822.0 255.7L821.4 256.8L820.8 257.9L820.3 258.9L820.0 259.9L819.7 260.8L819.7 261.7L820.0 262.5L820.5 263.0L821.0 263.3L821.6 263.4L822.1 263.5L822.6 263.6L823.2 263.6L824.0 263.7L824.8 263.5L825.7 263.2L826.7 262.8L827.9 262.0L829.1 261.1L830.4 260.1L831.7 259.0L833.0 257.8L834.3 256.6L835.6 255.5L836.9 254.2L838.2 252.9L839.4 251.6L840.6 250.4L841.7 249.2L842.8 248.0L843.8 246.8L844.8 245.7L845.6 244.7L846.3 243.8L846.9 243.1L845.7 242.2L845.2 242.9L844.5 243.7L843.7 244.8L842.7 245.9L841.7 247.1L840.7 248.2L839.6 249.4L838.4 250.6L837.1 251.9L835.8 253.2L834.6 254.4L833.3 255.6L832.0 256.7L830.7 257.9L829.4 259.0L828.2 260.0L827.0 260.9L826.0 261.5L825.2 261.9L824.5 262.1L823.9 262.2L823.3 262.2L822.8 262.1L822.4 262.1L822.0 261.9L821.7 261.8L821.6 261.7L821.7 261.7L821.8 261.7L821.9 261.6L822.3 261.3L822.9 260.8L823.7 260.1L824.6 259.4L825.5 258.5L826.5 257.6L827.4 256.5L828.4 255.4L829.4 254.1L830.4 252.8L831.3 251.5L832.2 250.2L833.1 248.9L833.9 247.5L834.7 246.2L835.4 244.9L835.9 243.9L836.3 243.1ZM849.9 240.3L849.3 241.1L848.5 242.1L847.6 243.3L846.6 244.6L845.6 245.9L844.7 247.1L843.7 248.3L842.7 249.5L841.6 250.8L840.5 252.1L839.4 253.3L838.5 254.4L837.7 255.5L836.8 256.6L836.0 257.7L835.3 258.7L834.6 259.7L834.2 260.6L834.0 261.5L834.2 262.4L834.7 263.0L835.3 263.3L835.9 263.4L836.5 263.5L837.0 263.6L837.7 263.6L838.6 263.7L839.5 263.5L840.5 263.3L841.6 262.8L842.7 262.0L844.0 261.1L845.3 260.0L846.6 258.9L847.9 257.7L849.1 256.7L850.3 255.6L851.6 254.4L852.8 253.3L853.9 252.2L854.9 251.3L855.6 250.6L854.6 249.6L853.9 250.2L852.9 251.1L851.8 252.2L850.6 253.4L849.3 254.5L848.1 255.6L846.9 256.6L845.6 257.8L844.3 258.9L843.1 260.0L841.9 260.8L840.9 261.5L840.0 261.9L839.2 262.1L838.5 262.2L837.8 262.2L837.2 262.1L836.7 262.1L836.3 261.9L835.9 261.8L835.8 261.7L835.9 261.7L836.0 261.9L836.2 261.8L836.7 261.5L837.4 261.0L838.5 260.4L839.6 259.6L840.9 258.8L842.0 257.8L843.2 256.7L844.3 255.6L845.5 254.3L846.7 253.0L847.8 251.6L848.8 250.3L849.8 248.9L850.8 247.4L851.6 245.9L852.4 244.6L853.0 243.5L853.5 242.7ZM865.7 251.2L866.5 250.6L867.7 249.7L869.2 248.8L870.7 247.7L872.2 246.6L873.6 245.6L874.9 244.5L876.3 243.4L877.6 242.2L878.9 241.1L880.0 240.0L881.1 239.0L882.0 238.1L882.7 237.3L883.4 236.5L884.0 235.8L884.5 235.2L884.8 234.8L883.7 233.9L883.3 234.3L882.9 234.9L882.3 235.6L881.7 236.3L880.9 237.1L880.1 238.0L879.0 238.9L877.9 240.0L876.6 241.1L875.3 242.3L874.0 243.4L872.7 244.4L871.3 245.5L869.8 246.5L868.3 247.6L866.9 248.6L865.7 249.4L864.9 250.0ZM883.1 235.5L882.8 236.0L882.3 236.7L881.8 237.6L881.2 238.5L880.6 239.4L879.9 240.4L879.0 241.5L878.1 242.7L877.0 244.1L875.9 245.5L874.9 246.8L873.9 248.2L872.9 249.5L872.0 250.8L871.1 252.1L870.2 253.4L869.4 254.6L868.7 255.7L868.1 256.7L867.6 257.6L867.1 258.5L866.7 259.3L866.4 260.1L866.2 260.9L866.2 261.7L866.5 262.4L867.0 262.9L867.7 263.1L868.4 263.2L869.1 263.1L869.9 262.9L870.9 262.6L872.0 262.2L873.1 261.7L874.3 261.1L875.4 260.4L876.5 259.7L877.6 258.9L878.7 258.0L879.8 257.0L880.9 256.1L881.9 255.3L883.0 254.4L884.1 253.5L885.1 252.6L886.1 251.8L886.9 251.1L887.5 250.6L886.6 249.5L886.0 250.0L885.2 250.7L884.2 251.5L883.1 252.4L882.1 253.3L881.0 254.2L880.0 255.0L878.9 255.9L877.8 256.8L876.7 257.7L875.6 258.5L874.6 259.2L873.6 259.8L872.5 260.4L871.4 260.8L870.4 261.2L869.5 261.5L868.9 261.7L868.4 261.7L868.1 261.7L867.9 261.6L867.9 261.5L868.0 261.5L868.1 261.5L868.3 261.3L868.8 261.0L869.5 260.5L870.3 259.9L871.2 259.2L872.1 258.4L873.0 257.4L873.9 256.3L875.0 255.1L876.0 253.8L877.0 252.4L878.0 251.1L878.9 249.7L879.9 248.2L880.8 246.6L881.7 245.1L882.4 243.6L883.1 242.2L883.6 240.9L883.9 239.6L884.1 238.4L884.3 237.4L884.4 236.6L884.5 236.0ZM907.5 241.3L907.0 241.8L906.2 242.5L905.3 243.4L904.4 244.4L903.4 245.3L902.5 246.3L901.7 247.4L900.8 248.6L899.8 249.9L898.9 251.3L898.0 252.5L897.3 253.7L896.5 254.8L895.8 256.0L895.0 257.2L894.4 258.3L893.8 259.4L893.5 260.3L893.4 261.3L893.7 262.1L894.3 262.6L895.0 262.9L895.7 262.9L896.4 262.8L897.1 262.7L898.0 262.5L899.0 262.1L900.0 261.7L901.1 261.1L902.3 260.4L903.4 259.6L904.7 258.5L905.9 257.4L907.2 256.2L908.5 255.0L909.8 253.9L911.1 252.6L912.5 251.2L913.9 249.7L915.3 248.4L916.4 247.3L917.2 246.4L916.2 245.4L915.3 246.2L914.2 247.4L912.9 248.7L911.5 250.1L910.1 251.5L908.8 252.8L907.5 254.0L906.2 255.2L905.0 256.4L903.7 257.4L902.5 258.4L901.4 259.2L900.4 259.9L899.4 260.4L898.5 260.8L897.6 261.1L896.8 261.3L896.2 261.4L895.7 261.4L895.3 261.3L895.2 261.2L895.2 261.2L895.3 261.3L895.4 261.2L895.8 260.8L896.6 260.2L897.6 259.5L898.7 258.6L899.8 257.7L900.9 256.6L901.9 255.5L902.9 254.3L904.0 253.1L905.0 251.8L905.9 250.5L906.7 249.2L907.4 247.9L907.9 246.5L908.3 245.2L908.7 244.0L909.0 243.0L909.2 242.3ZM922.3 240.8L921.7 241.5L920.8 242.4L919.8 243.4L918.7 244.6L917.5 245.9L916.4 247.3L915.3 248.8L914.1 250.4L912.9 252.2L911.7 254.0L910.5 255.7L909.3 257.4L908.1 259.1L906.9 260.8L905.8 262.4L904.6 264.0L903.3 265.5L901.8 267.1L900.2 268.6L898.4 270.2L896.5 271.7L894.5 273.2L892.5 274.6L890.4 275.8L888.2 276.9L886.0 277.9L883.7 278.8L881.3 279.6L879.0 280.3L876.7 280.9L874.4 281.3L872.0 281.7L869.6 282.0L867.2 282.2L865.0 282.2L863.0 282.2L861.1 282.1L859.4 281.9L857.8 281.6L856.4 281.3L855.1 280.9L854.0 280.4L853.0 280.0L852.2 279.5L851.5 278.9L851.1 278.4L850.8 277.9L850.7 277.4L850.8 276.9L851.1 276.2L851.6 275.5L852.3 274.8L853.1 274.1L854.1 273.4L855.2 272.8L856.5 272.2L857.9 271.6L859.5 271.1L861.3 270.6L863.1 270.3L865.1 269.9L867.3 269.7L869.7 269.5L872.1 269.4L874.5 269.3L876.8 269.3L879.1 269.5L881.4 269.7L883.8 270.0L886.1 270.3L888.3 270.7L890.6 271.2L892.9 271.7L895.4 272.4L897.9 273.1L900.2 273.8L902.1 274.4L903.5 274.9L903.9 273.5L902.5 273.0L900.6 272.4L898.3 271.7L895.8 271.0L893.3 270.3L890.9 269.8L888.6 269.3L886.3 268.9L884.0 268.5L881.6 268.2L879.2 268.0L876.9 267.9L874.5 267.9L872.0 267.9L869.6 268.0L867.2 268.2L864.9 268.5L862.8 268.8L860.9 269.2L859.1 269.7L857.5 270.2L855.9 270.8L854.5 271.5L853.3 272.2L852.2 272.9L851.3 273.7L850.5 274.6L849.9 275.5L849.4 276.5L849.3 277.4L849.4 278.3L849.9 279.2L850.5 280.0L851.4 280.6L852.3 281.2L853.4 281.8L854.6 282.2L856.0 282.7L857.5 283.1L859.2 283.4L861.0 283.6L862.9 283.7L865.0 283.7L867.3 283.6L869.7 283.4L872.1 283.2L874.6 282.8L877.0 282.3L879.4 281.7L881.8 281.0L884.2 280.1L886.5 279.2L888.8 278.2L891.1 277.1L893.3 276.0L895.5 274.7L897.7 273.4L899.8 272.1L901.8 270.7L903.7 269.2L905.5 267.8L907.2 266.4L908.7 264.9L910.1 263.4L911.6 261.9L912.9 260.3L914.4 258.7L915.8 257.0L917.1 255.2L918.4 253.4L919.6 251.7L920.6 250.1L921.5 248.5L922.2 246.9L922.8 245.3L923.3 243.9L923.7 242.7L924.0 241.8ZM978.4 230.0L977.4 230.6L976.1 231.4L974.5 232.3L972.6 233.2L970.7 234.2L968.8 235.1L966.7 235.9L964.5 236.7L962.2 237.6L959.8 238.4L957.4 239.1L955.0 239.7L952.7 240.2L950.4 240.6L948.0 240.9L945.7 241.1L943.5 241.3L941.3 241.3L939.2 241.2L937.1 241.0L935.1 240.7L933.2 240.3L931.3 239.8L929.5 239.2L927.8 238.5L926.2 237.5L924.7 236.5L923.3 235.4L922.0 234.2L921.0 233.0L920.1 231.7L919.4 230.2L918.8 228.7L918.4 227.1L918.1 225.7L918.0 224.4L917.9 223.2L918.0 222.0L918.2 220.8L918.5 219.6L919.0 218.5L919.6 217.3L920.3 216.2L921.3 215.1L922.4 214.0L923.7 212.9L925.2 211.9L926.8 211.1L928.6 210.4L930.5 209.8L932.6 209.4L934.8 209.0L937.1 208.7L939.5 208.5L941.9 208.3L944.5 208.2L947.1 208.2L949.8 208.3L952.5 208.4L955.1 208.7L957.7 209.1L960.4 209.6L963.1 210.2L965.7 210.8L968.3 211.6L970.7 212.4L973.0 213.2L975.3 214.2L977.5 215.2L979.6 216.3L981.6 217.3L983.5 218.3L985.4 219.3L987.2 220.4L988.9 221.5L990.5 222.4L991.8 223.3L992.8 223.9L993.5 222.6L992.6 222.0L991.3 221.2L989.7 220.2L988.0 219.2L986.1 218.1L984.2 217.0L982.3 216.0L980.3 215.0L978.1 213.9L975.9 212.9L973.6 211.9L971.2 211.0L968.7 210.2L966.1 209.4L963.4 208.7L960.7 208.1L958.0 207.6L955.3 207.2L952.6 207.0L949.9 206.8L947.1 206.8L944.5 206.8L941.9 206.9L939.4 207.1L937.0 207.3L934.6 207.6L932.4 207.9L930.2 208.3L928.1 208.9L926.2 209.5L924.3 210.2L922.6 211.0L920.9 211.9L919.3 212.9L917.9 214.0L916.7 215.3L915.7 216.6L914.9 218.1L914.2 219.7L913.8 221.4L913.6 223.1L913.7 224.9L914.1 226.6L914.7 228.4L915.6 230.1L916.6 231.8L917.7 233.4L919.0 234.8L920.4 236.0L922.0 237.1L923.6 238.2L925.4 239.1L927.2 239.9L929.0 240.6L930.9 241.2L932.8 241.8L934.9 242.2L937.0 242.5L939.1 242.7L941.3 242.8L943.5 242.7L945.8 242.6L948.2 242.3L950.6 242.0L953.0 241.6L955.3 241.1L957.7 240.5L960.2 239.8L962.6 239.0L965.0 238.1L967.3 237.2L969.4 236.4L971.4 235.5L973.3 234.5L975.2 233.5L976.8 232.6L978.1 231.8L979.1 231.3ZM997.6 216.4L997.1 217.2L996.3 218.2L995.4 219.5L994.4 220.9L993.2 222.3L992.0 223.8L990.6 225.3L989.0 226.9L987.3 228.5L985.5 230.2L983.6 232.0L981.7 233.8L979.8 235.6L977.7 237.5L975.6 239.4L973.4 241.4L971.4 243.4L969.5 245.4L967.7 247.3L965.9 249.4L964.2 251.4L962.7 253.4L961.4 255.1L960.3 256.6L959.5 257.7L958.9 258.6L958.6 259.3L958.3 259.9L958.1 260.6L958.2 261.2L958.3 261.9L958.8 262.4L959.4 262.7L960.1 262.9L960.9 262.9L961.7 262.9L962.7 262.7L963.7 262.6L964.9 262.3L966.2 261.9L967.7 261.3L969.4 260.5L971.3 259.3L973.4 258.0L975.7 256.5L978.2 254.8L980.7 253.0L983.4 251.1L986.2 249.0L989.3 246.7L992.5 244.2L995.7 241.7L998.9 239.4L1001.9 237.3L1004.9 235.3L1008.2 233.4L1011.3 231.6L1014.2 229.9L1016.7 228.6L1018.5 227.6L1017.8 226.3L1016.0 227.3L1013.5 228.7L1010.6 230.3L1007.4 232.1L1004.2 234.1L1001.1 236.1L998.0 238.2L994.8 240.6L991.6 243.1L988.4 245.5L985.4 247.9L982.5 250.0L979.9 251.9L977.3 253.6L974.9 255.3L972.7 256.8L970.6 258.1L968.7 259.2L967.1 260.0L965.7 260.5L964.5 260.9L963.4 261.1L962.5 261.3L961.6 261.4L960.9 261.5L960.3 261.4L959.9 261.3L959.7 261.2L959.6 261.2L959.6 261.2L959.8 261.2L960.0 261.2L960.4 261.0L961.0 260.7L961.9 260.1L963.1 259.3L964.5 258.2L966.2 256.9L968.1 255.4L970.2 253.7L972.3 252.0L974.2 250.2L976.2 248.3L978.2 246.3L980.3 244.2L982.3 242.0L984.2 239.9L986.0 237.7L987.7 235.6L989.2 233.5L990.6 231.3L992.0 229.3L993.2 227.3L994.3 225.5L995.4 223.8L996.3 222.1L997.1 220.5L997.8 219.1L998.4 218.0L998.9 217.1ZM1017.6 226.5L1016.7 227.3L1015.5 228.4L1014.1 229.7L1012.5 231.1L1010.8 232.7L1009.1 234.3L1007.3 236.0L1005.4 237.9L1003.4 239.8L1001.3 241.8L999.4 243.8L997.5 245.8L995.8 247.7L994.0 249.7L992.3 251.7L990.7 253.6L989.4 255.4L988.3 256.7L987.5 257.8L986.9 258.5L986.6 259.1L986.3 259.5L986.1 260.0L986.0 260.6L985.9 261.2L986.2 261.8L986.6 262.2L987.2 262.5L987.8 262.6L988.6 262.6L989.4 262.5L990.3 262.4L991.4 262.2L992.6 261.8L993.9 261.3L995.4 260.4L997.0 259.3L998.7 258.0L1000.6 256.5L1002.5 254.9L1004.5 253.0L1006.6 251.1L1008.8 248.9L1011.1 246.3L1013.4 243.7L1015.8 241.0L1018.2 238.5L1020.5 236.3L1022.8 234.3L1025.2 232.4L1027.5 230.6L1029.9 229.0L1032.1 227.5L1034.3 226.2L1036.3 225.1L1038.2 224.1L1040.0 223.4L1041.8 222.7L1043.5 222.1L1045.2 221.6L1046.9 221.2L1048.6 220.9L1050.2 220.7L1051.7 220.5L1053.0 220.4L1054.0 220.3L1053.8 218.8L1052.9 218.9L1051.6 219.1L1050.1 219.2L1048.3 219.5L1046.6 219.8L1044.8 220.2L1043.1 220.8L1041.3 221.3L1039.5 222.0L1037.6 222.8L1035.6 223.8L1033.5 224.9L1031.3 226.3L1029.1 227.8L1026.7 229.4L1024.3 231.2L1021.9 233.2L1019.5 235.2L1017.1 237.5L1014.7 240.1L1012.3 242.7L1010.0 245.4L1007.7 247.9L1005.6 250.0L1003.6 252.0L1001.6 253.8L999.6 255.4L997.8 256.9L996.1 258.2L994.6 259.2L993.3 260.0L992.1 260.5L991.0 260.8L990.1 261.0L989.2 261.1L988.5 261.1L987.9 261.1L987.6 261.1L987.4 261.0L987.4 260.9L987.4 260.9L987.4 260.9L987.5 260.9L987.7 260.9L988.0 260.8L988.7 260.5L989.5 260.0L990.6 259.2L992.0 258.1L993.8 256.7L995.7 255.2L997.8 253.5L999.8 251.6L1001.7 249.8L1003.6 247.8L1005.5 245.7L1007.4 243.5L1009.2 241.3L1010.9 239.2L1012.4 237.2L1013.8 235.3L1015.1 233.3L1016.2 231.5L1017.2 229.8L1018.1 228.4L1018.7 227.4ZM1024.5 259.5L1025.4 259.0L1026.5 258.4L1027.9 257.6L1029.4 256.7L1030.9 255.8L1032.4 254.9L1034.0 253.9L1035.7 252.7L1037.4 251.6L1039.1 250.4L1040.6 249.3L1041.8 248.3L1042.7 247.5L1043.5 246.8L1044.1 246.1L1044.5 245.4L1044.8 244.7L1044.8 243.9L1044.5 243.2L1043.9 242.6L1043.2 242.1L1042.3 241.7L1041.3 241.5L1040.3 241.5L1039.2 241.7L1037.9 242.0L1036.5 242.5L1035.1 243.0L1033.7 243.7L1032.3 244.5L1030.8 245.3L1029.3 246.3L1027.8 247.4L1026.3 248.6L1025.0 249.8L1023.8 251.0L1022.9 252.3L1022.1 253.6L1021.5 255.0L1021.0 256.3L1020.7 257.5L1020.6 258.7L1020.8 259.8L1021.2 260.8L1021.8 261.7L1022.6 262.2L1023.5 262.6L1024.5 262.8L1025.5 263.0L1026.6 263.0L1027.9 263.0L1029.2 262.8L1030.7 262.4L1032.3 261.9L1034.0 261.2L1035.9 260.2L1037.8 259.2L1039.8 258.0L1041.7 256.9L1043.5 255.8L1045.3 254.7L1047.1 253.4L1048.9 252.2L1050.5 251.0L1051.8 250.0L1052.8 249.3L1052.0 248.1L1051.0 248.8L1049.6 249.8L1048.0 251.0L1046.3 252.2L1044.5 253.5L1042.8 254.6L1041.0 255.7L1039.1 256.8L1037.1 257.9L1035.2 258.9L1033.4 259.8L1031.8 260.5L1030.3 261.0L1029.0 261.3L1027.7 261.5L1026.6 261.6L1025.6 261.6L1024.8 261.4L1024.2 261.1L1023.9 260.7L1023.8 260.3L1023.8 259.9L1023.9 259.5L1024.0 259.1L1024.2 258.5L1024.6 257.7L1025.2 256.8L1025.8 255.8L1026.5 254.8L1027.3 253.8L1028.1 252.6L1029.1 251.4L1030.2 250.0L1031.4 248.7L1032.5 247.5L1033.7 246.5L1034.8 245.6L1036.0 244.8L1037.3 244.1L1038.5 243.6L1039.5 243.2L1040.4 242.9L1041.2 242.9L1041.9 243.1L1042.5 243.3L1043.0 243.7L1043.3 244.0L1043.4 244.2L1043.4 244.4L1043.2 244.7L1042.9 245.2L1042.4 245.8L1041.7 246.4L1040.8 247.2L1039.7 248.1L1038.2 249.2L1036.6 250.4L1034.9 251.5L1033.2 252.6L1031.6 253.6L1030.2 254.6L1028.7 255.5L1027.2 256.4L1025.8 257.1L1024.6 257.8L1023.8 258.3ZM1080.9 240.8L1080.0 240.9L1078.7 241.0L1077.2 241.2L1075.5 241.4L1073.9 241.7L1072.3 242.1L1070.7 242.6L1069.1 243.1L1067.5 243.8L1065.9 244.5L1064.3 245.2L1062.8 246.1L1061.2 247.1L1059.7 248.3L1058.3 249.5L1056.9 250.7L1055.7 251.9L1054.7 253.0L1053.9 254.1L1053.2 255.2L1052.7 256.3L1052.3 257.3L1052.0 258.3L1051.9 259.3L1052.1 260.2L1052.6 261.0L1053.3 261.6L1054.0 262.0L1054.8 262.2L1055.6 262.3L1056.4 262.2L1057.3 262.1L1058.3 261.8L1059.3 261.4L1060.4 260.9L1061.6 260.3L1062.9 259.7L1064.3 258.9L1065.8 258.0L1067.4 257.0L1068.9 256.0L1070.4 255.0L1072.0 253.7L1073.7 252.3L1075.4 250.8L1077.0 249.4L1078.3 248.3L1079.2 247.4L1078.3 246.3L1077.3 247.2L1076.0 248.4L1074.4 249.7L1072.8 251.2L1071.1 252.6L1069.6 253.8L1068.1 254.8L1066.6 255.8L1065.1 256.8L1063.6 257.6L1062.2 258.4L1060.9 259.0L1059.8 259.6L1058.8 260.0L1057.8 260.4L1057.0 260.7L1056.3 260.8L1055.7 260.8L1055.2 260.7L1054.7 260.5L1054.4 260.2L1054.2 259.9L1054.2 259.7L1054.3 259.5L1054.5 259.1L1054.9 258.7L1055.5 258.1L1056.1 257.4L1056.9 256.6L1057.8 255.7L1058.7 254.7L1059.8 253.6L1061.0 252.4L1062.2 251.1L1063.5 250.0L1064.7 248.9L1066.0 247.9L1067.3 246.8L1068.6 245.9L1070.0 244.9L1071.4 244.1L1072.7 243.5L1074.2 243.1L1075.8 242.8L1077.3 242.6L1078.8 242.5L1080.1 242.4L1081.0 242.3ZM1106.6 223.1L1105.5 224.0L1104.0 225.3L1102.3 226.8L1100.4 228.5L1098.4 230.3L1096.5 232.1L1094.5 234.0L1092.4 236.0L1090.2 238.2L1088.0 240.3L1085.9 242.5L1083.9 244.5L1081.9 246.4L1079.9 248.4L1077.9 250.4L1076.1 252.3L1074.4 254.0L1073.0 255.4L1072.0 256.6L1071.1 257.6L1070.4 258.4L1069.9 259.2L1069.5 259.8L1069.2 260.5L1069.1 261.3L1069.4 262.1L1070.0 262.5L1070.6 262.6L1071.3 262.6L1071.9 262.6L1072.6 262.6L1073.4 262.5L1074.3 262.3L1075.3 262.1L1076.5 261.6L1077.9 260.9L1079.6 259.9L1081.7 258.5L1083.9 256.9L1086.1 255.3L1087.9 254.0L1089.2 253.1L1088.3 251.9L1087.0 252.8L1085.2 254.2L1083.1 255.7L1080.8 257.3L1078.8 258.7L1077.1 259.7L1075.9 260.3L1074.8 260.7L1074.0 260.9L1073.2 261.1L1072.5 261.1L1071.8 261.2L1071.3 261.2L1070.8 261.1L1070.6 261.1L1070.6 261.1L1070.7 261.3L1070.8 261.3L1071.1 261.2L1071.6 261.0L1072.3 260.6L1073.2 260.1L1074.4 259.3L1075.7 258.3L1077.3 257.0L1079.1 255.5L1081.1 253.8L1083.2 251.9L1085.3 250.0L1087.4 248.0L1089.4 246.0L1091.6 243.9L1093.7 241.7L1095.9 239.5L1097.9 237.4L1099.8 235.4L1101.6 233.5L1103.4 231.6L1105.2 229.8L1106.8 228.1L1108.1 226.7L1109.1 225.7ZM1124.6 240.8L1123.7 240.9L1122.4 241.0L1120.9 241.2L1119.3 241.4L1117.6 241.7L1116.0 242.1L1114.5 242.6L1112.9 243.1L1111.2 243.8L1109.6 244.5L1108.0 245.2L1106.5 246.1L1105.0 247.1L1103.5 248.3L1102.0 249.5L1100.7 250.7L1099.5 251.9L1098.5 253.0L1097.7 254.1L1097.0 255.2L1096.4 256.3L1096.0 257.3L1095.8 258.3L1095.7 259.3L1095.9 260.2L1096.4 261.0L1097.0 261.6L1097.7 262.0L1098.5 262.2L1099.3 262.3L1100.2 262.2L1101.1 262.1L1102.0 261.8L1103.1 261.4L1104.2 260.9L1105.3 260.3L1106.6 259.7L1108.0 258.9L1109.6 258.0L1111.1 257.0L1112.7 256.0L1114.2 255.0L1115.8 253.7L1117.5 252.3L1119.2 250.8L1120.7 249.4L1122.0 248.3L1123.0 247.4L1122.0 246.3L1121.1 247.2L1119.7 248.4L1118.2 249.7L1116.5 251.2L1114.9 252.6L1113.3 253.8L1111.8 254.8L1110.3 255.8L1108.8 256.8L1107.3 257.6L1105.9 258.4L1104.7 259.0L1103.5 259.6L1102.5 260.0L1101.6 260.4L1100.7 260.7L1100.0 260.8L1099.4 260.8L1098.9 260.7L1098.5 260.5L1098.2 260.2L1098.0 259.9L1098.0 259.7L1098.1 259.5L1098.3 259.1L1098.7 258.7L1099.2 258.1L1099.9 257.4L1100.7 256.6L1101.5 255.7L1102.5 254.7L1103.6 253.6L1104.8 252.4L1106.0 251.1L1107.3 250.0L1108.5 248.9L1109.7 247.9L1111.0 246.8L1112.4 245.9L1113.7 244.9L1115.1 244.1L1116.5 243.5L1117.9 243.1L1119.5 242.8L1121.1 242.6L1122.6 242.5L1123.8 242.4L1124.8 242.3ZM1150.3 223.1L1149.2 224.0L1147.8 225.3L1146.1 226.8L1144.1 228.5L1142.2 230.3L1140.2 232.1L1138.2 234.0L1136.1 236.0L1134.0 238.2L1131.8 240.3L1129.6 242.5L1127.6 244.5L1125.7 246.4L1123.6 248.4L1121.7 250.4L1119.8 252.3L1118.2 254.0L1116.8 255.4L1115.7 256.6L1114.9 257.6L1114.2 258.4L1113.7 259.2L1113.2 259.8L1112.9 260.5L1112.8 261.3L1113.2 262.1L1113.8 262.5L1114.4 262.6L1115.0 262.6L1115.7 262.6L1116.3 262.6L1117.1 262.5L1118.0 262.3L1119.0 262.1L1120.2 261.6L1121.6 260.9L1123.3 259.9L1125.4 258.5L1127.6 256.9L1129.8 255.3L1131.6 254.0L1132.9 253.1L1132.1 251.9L1130.8 252.8L1128.9 254.2L1126.8 255.7L1124.6 257.3L1122.5 258.7L1120.9 259.7L1119.7 260.3L1118.6 260.7L1117.7 260.9L1116.9 261.1L1116.2 261.1L1115.6 261.2L1115.0 261.2L1114.6 261.1L1114.3 261.1L1114.4 261.1L1114.5 261.3L1114.6 261.3L1114.8 261.2L1115.3 261.0L1116.0 260.6L1117.0 260.1L1118.1 259.3L1119.5 258.3L1121.0 257.0L1122.8 255.5L1124.8 253.8L1126.9 251.9L1129.0 250.0L1131.1 248.0L1133.2 246.0L1135.3 243.9L1137.5 241.7L1139.6 239.5L1141.6 237.4L1143.5 235.4L1145.4 233.5L1147.2 231.6L1148.9 229.8L1150.5 228.1L1151.8 226.7L1152.8 225.7ZM1158.7 241.6L1158.0 242.2L1157.0 243.0L1155.8 243.9L1154.6 244.9L1153.3 246.0L1152.1 247.1L1150.9 248.2L1149.7 249.4L1148.4 250.7L1147.1 251.9L1145.9 253.2L1144.9 254.3L1143.8 255.4L1142.7 256.5L1141.6 257.6L1140.6 258.7L1139.8 259.7L1139.2 260.6L1138.8 261.5L1139.1 262.5L1139.7 263.0L1140.4 263.2L1141.2 263.2L1142.0 263.1L1142.8 263.0L1143.8 262.7L1144.9 262.3L1146.1 261.8L1147.4 261.2L1148.7 260.4L1150.1 259.4L1151.7 258.3L1153.3 257.0L1154.9 255.6L1156.5 254.3L1158.0 253.0L1159.7 251.7L1161.5 250.2L1163.3 248.8L1164.9 247.5L1166.3 246.4L1167.3 245.6L1166.4 244.4L1165.4 245.2L1164.0 246.4L1162.3 247.7L1160.6 249.1L1158.8 250.5L1157.1 251.8L1155.6 253.1L1153.9 254.5L1152.3 255.9L1150.8 257.1L1149.3 258.3L1147.9 259.2L1146.7 259.9L1145.5 260.5L1144.4 261.0L1143.4 261.3L1142.5 261.5L1141.7 261.7L1141.2 261.7L1140.7 261.7L1140.5 261.6L1140.6 261.6L1140.7 261.9L1140.8 261.9L1141.4 261.5L1142.4 261.1L1143.7 260.5L1145.2 259.8L1146.7 258.9L1148.1 257.9L1149.4 256.8L1150.8 255.6L1152.1 254.3L1153.4 253.0L1154.6 251.7L1155.7 250.4L1156.7 249.0L1157.6 247.5L1158.4 246.1L1159.2 244.8L1159.7 243.7L1160.2 242.8ZM1161.1 236.8L1161.9 236.4L1163.0 235.8L1164.2 235.0L1165.5 234.2L1166.6 233.6L1167.4 233.1L1166.3 231.3L1165.6 231.7L1164.4 232.4L1163.2 233.2L1161.9 233.9L1160.8 234.6L1160.0 235.0ZM1158.4 254.9L1159.5 254.6L1161.0 254.1L1162.8 253.6L1164.8 252.9L1166.8 252.1L1168.7 251.2L1170.5 250.1L1172.5 248.7L1174.5 247.2L1176.3 245.8L1177.9 244.6L1179.0 243.7L1178.1 242.6L1177.0 243.4L1175.4 244.6L1173.6 246.0L1171.7 247.5L1169.8 248.8L1168.0 249.9L1166.2 250.8L1164.3 251.5L1162.4 252.2L1160.6 252.7L1159.0 253.2L1157.9 253.6ZM1178.9 242.5L1178.1 243.3L1177.1 244.3L1175.9 245.5L1174.7 246.8L1173.4 248.1L1172.3 249.4L1171.3 250.6L1170.3 251.9L1169.2 253.3L1168.3 254.5L1167.4 255.8L1166.8 256.8L1166.2 257.8L1165.9 258.7L1165.6 259.4L1165.5 260.1L1165.4 260.6L1165.3 261.0L1166.8 262.0L1167.1 261.7L1167.5 261.3L1168.0 260.9L1168.6 260.5L1169.2 259.8L1169.9 259.1L1170.7 258.2L1171.6 257.0L1172.6 255.8L1173.6 254.4L1174.5 253.1L1175.5 251.7L1176.3 250.3L1177.2 248.7L1178.1 247.1L1178.9 245.6L1179.5 244.3L1180.0 243.4ZM1168.0 261.2L1169.0 260.1L1170.3 258.5L1171.9 256.6L1173.7 254.6L1175.5 252.7L1177.2 251.1L1178.8 249.7L1180.6 248.2L1182.4 246.9L1184.2 245.7L1185.8 244.6L1187.2 243.8L1188.4 243.2L1189.3 242.8L1190.1 242.5L1190.8 242.4L1191.4 242.3L1191.9 242.3L1192.4 242.3L1192.7 242.4L1192.8 242.5L1192.8 242.5L1192.7 242.6L1192.6 242.9L1192.2 243.4L1191.5 244.2L1190.6 245.2L1189.6 246.2L1188.7 247.3L1187.8 248.5L1186.9 249.7L1186.1 250.9L1185.3 252.2L1184.5 253.5L1183.8 254.8L1183.2 255.8L1182.7 256.8L1182.3 257.7L1181.9 258.6L1181.6 259.4L1181.4 260.2L1181.3 261.0L1181.3 261.7L1181.6 262.4L1182.1 262.9L1182.7 263.1L1183.4 263.2L1184.2 263.1L1185.1 262.9L1186.1 262.6L1187.2 262.2L1188.5 261.7L1189.7 261.1L1190.9 260.4L1192.1 259.7L1193.4 258.8L1194.6 257.8L1195.9 256.8L1197.2 255.8L1198.4 254.8L1199.7 253.8L1201.1 252.8L1202.6 251.7L1203.9 250.7L1205.0 249.9L1205.8 249.3L1204.9 248.1L1204.1 248.7L1203.0 249.6L1201.7 250.6L1200.3 251.6L1198.8 252.7L1197.5 253.7L1196.3 254.6L1195.0 255.7L1193.8 256.7L1192.5 257.6L1191.3 258.5L1190.2 259.2L1189.0 259.8L1187.9 260.4L1186.7 260.9L1185.6 261.2L1184.7 261.5L1184.0 261.7L1183.5 261.7L1183.1 261.7L1183.0 261.6L1183.0 261.6L1183.1 261.5L1183.2 261.4L1183.4 261.2L1183.9 260.9L1184.5 260.5L1185.2 259.9L1186.0 259.1L1186.8 258.2L1187.6 257.2L1188.4 256.0L1189.2 254.7L1190.0 253.4L1190.8 252.0L1191.5 250.8L1192.1 249.5L1192.7 248.2L1193.3 246.9L1193.8 245.6L1194.2 244.4L1194.4 243.4L1194.5 242.6L1194.3 241.8L1193.8 241.2L1193.2 241.0L1192.6 240.9L1192.0 240.8L1191.3 240.9L1190.6 240.9L1189.8 241.1L1188.8 241.4L1187.7 241.9L1186.5 242.5L1185.1 243.4L1183.4 244.5L1181.6 245.7L1179.7 247.1L1177.9 248.5L1176.2 250.0L1174.4 251.7L1172.6 253.6L1170.9 255.6L1169.2 257.5L1167.9 259.1L1166.9 260.3ZM1235.2 243.4L1234.4 243.1L1233.3 242.7L1232.0 242.2L1230.5 241.8L1229.0 241.5L1227.5 241.5L1226.1 241.7L1224.7 242.1L1223.3 242.6L1221.9 243.3L1220.6 244.0L1219.3 244.9L1218.0 245.9L1216.8 247.2L1215.6 248.5L1214.5 249.9L1213.6 251.2L1212.9 252.5L1212.4 253.7L1212.1 255.0L1211.9 256.2L1211.9 257.4L1212.2 258.5L1212.6 259.5L1213.4 260.2L1214.3 260.7L1215.2 261.0L1216.3 261.1L1217.4 261.1L1218.4 261.0L1219.6 260.8L1220.8 260.4L1222.1 259.9L1223.4 259.2L1224.8 258.5L1226.2 257.6L1227.5 256.6L1229.0 255.4L1230.5 254.1L1231.9 252.7L1233.3 251.4L1234.6 250.2L1235.8 248.9L1237.1 247.7L1238.4 246.4L1239.5 245.3L1240.4 244.3L1241.1 243.7L1240.0 242.6L1239.4 243.3L1238.4 244.3L1237.3 245.4L1236.1 246.6L1234.8 247.9L1233.6 249.1L1232.3 250.3L1230.9 251.7L1229.5 253.0L1228.0 254.3L1226.6 255.5L1225.3 256.4L1224.1 257.2L1222.8 258.0L1221.5 258.5L1220.3 259.0L1219.2 259.4L1218.2 259.6L1217.3 259.6L1216.5 259.5L1215.8 259.2L1215.2 258.9L1214.9 258.6L1214.8 258.3L1214.8 258.0L1214.9 257.5L1215.2 256.8L1215.5 256.0L1215.9 255.1L1216.4 254.2L1216.9 253.1L1217.6 251.9L1218.4 250.5L1219.3 249.2L1220.2 248.0L1221.1 247.0L1222.1 246.0L1223.1 245.2L1224.2 244.4L1225.4 243.7L1226.5 243.2L1227.7 242.9L1228.8 243.0L1230.2 243.2L1231.5 243.6L1232.8 244.1L1234.0 244.5L1234.8 244.8ZM1242.7 240.9L1242.1 241.6L1241.2 242.5L1240.2 243.6L1239.1 244.8L1238.0 246.1L1236.9 247.5L1235.8 248.9L1234.6 250.6L1233.4 252.3L1232.2 254.0L1230.9 255.8L1229.6 257.5L1228.3 259.3L1226.9 261.1L1225.5 262.9L1224.1 264.8L1222.6 266.5L1221.1 268.1L1219.6 269.6L1218.1 271.0L1216.5 272.3L1214.9 273.6L1213.3 274.8L1211.5 275.8L1209.6 276.8L1207.6 277.7L1205.5 278.6L1203.5 279.3L1201.5 279.9L1199.6 280.4L1197.9 280.8L1196.2 281.0L1194.6 281.1L1193.1 281.1L1191.8 281.0L1190.7 280.9L1189.8 280.6L1189.1 280.2L1188.6 279.8L1188.2 279.3L1188.0 278.9L1188.0 278.5L1188.2 278.0L1188.7 277.4L1189.4 276.7L1190.3 275.9L1191.5 275.2L1192.8 274.3L1194.4 273.4L1196.2 272.5L1198.3 271.5L1200.5 270.5L1202.6 269.6L1204.7 268.8L1206.7 268.1L1208.7 267.5L1210.7 266.9L1212.7 266.4L1214.7 266.0L1216.6 265.6L1218.5 265.4L1220.5 265.2L1222.5 265.1L1224.3 265.0L1226.0 265.1L1227.5 265.2L1228.8 265.4L1229.8 265.6L1230.8 266.0L1231.6 266.4L1232.3 266.7L1232.9 267.0L1233.4 265.6L1232.9 265.4L1232.2 265.1L1231.3 264.7L1230.3 264.3L1229.1 263.9L1227.7 263.7L1226.1 263.6L1224.3 263.6L1222.4 263.6L1220.4 263.7L1218.4 263.9L1216.4 264.2L1214.4 264.5L1212.4 265.0L1210.3 265.5L1208.3 266.1L1206.2 266.8L1204.2 267.5L1202.1 268.3L1199.9 269.2L1197.7 270.2L1195.6 271.2L1193.7 272.2L1192.0 273.1L1190.7 273.9L1189.5 274.8L1188.4 275.6L1187.6 276.4L1187.0 277.3L1186.6 278.2L1186.6 279.1L1186.9 280.0L1187.5 280.8L1188.3 281.4L1189.3 281.9L1190.4 282.3L1191.6 282.5L1193.1 282.6L1194.7 282.6L1196.4 282.4L1198.2 282.2L1200.0 281.8L1201.9 281.3L1203.9 280.7L1206.0 279.9L1208.2 279.1L1210.2 278.1L1212.2 277.1L1214.1 276.1L1215.9 275.1L1217.7 273.9L1219.5 272.7L1221.2 271.4L1223.0 270.1L1224.7 268.6L1226.5 267.0L1228.2 265.4L1229.9 263.7L1231.5 262.0L1233.0 260.3L1234.5 258.5L1235.9 256.8L1237.2 255.0L1238.4 253.2L1239.5 251.5L1240.5 249.9L1241.4 248.3L1242.1 246.7L1242.7 245.1L1243.3 243.7L1243.7 242.6L1244.0 241.7ZM745.1 323.2L744.1 323.7L742.7 324.5L741.1 325.4L739.3 326.4L737.4 327.4L735.5 328.2L733.4 329.0L731.2 329.9L728.8 330.7L726.4 331.5L724.0 332.2L721.7 332.8L719.4 333.3L717.0 333.7L714.7 334.1L712.4 334.3L710.1 334.4L708.0 334.5L705.9 334.4L703.8 334.2L701.8 333.9L699.8 333.5L698.0 333.0L696.2 332.4L694.5 331.6L692.9 330.7L691.3 329.7L689.9 328.6L688.7 327.4L687.7 326.2L686.8 324.8L686.1 323.4L685.5 321.8L685.1 320.3L684.8 318.8L684.6 317.6L684.6 316.4L684.7 315.2L684.9 314.0L685.2 312.8L685.6 311.6L686.2 310.5L687.0 309.4L687.9 308.2L689.1 307.1L690.4 306.1L691.9 305.1L693.5 304.2L695.2 303.5L697.2 303.0L699.3 302.5L701.5 302.2L703.8 301.9L706.2 301.6L708.6 301.5L711.2 301.4L713.8 301.4L716.5 301.4L719.1 301.6L721.8 301.8L724.4 302.2L727.1 302.7L729.7 303.3L732.4 304.0L734.9 304.7L737.4 305.5L739.7 306.4L742.0 307.3L744.2 308.4L746.3 309.4L748.3 310.5L750.2 311.5L752.1 312.5L753.9 313.5L755.6 314.6L757.2 315.6L758.5 316.4L759.4 317.0L760.2 315.8L759.2 315.2L757.9 314.4L756.4 313.4L754.6 312.3L752.8 311.2L750.9 310.2L749.0 309.2L746.9 308.1L744.8 307.1L742.6 306.0L740.2 305.0L737.8 304.1L735.3 303.3L732.7 302.6L730.1 301.9L727.3 301.3L724.6 300.8L721.9 300.4L719.3 300.1L716.5 300.0L713.8 299.9L711.1 299.9L708.5 300.0L706.1 300.2L703.7 300.4L701.3 300.7L699.0 301.1L696.8 301.5L694.8 302.0L692.8 302.6L691.0 303.3L689.2 304.1L687.6 305.0L686.0 306.0L684.6 307.2L683.4 308.4L682.4 309.8L681.5 311.3L680.9 312.9L680.5 314.5L680.3 316.3L680.4 318.0L680.7 319.8L681.4 321.5L682.2 323.3L683.3 324.9L684.4 326.5L685.7 327.9L687.1 329.2L688.6 330.3L690.3 331.3L692.0 332.2L693.8 333.0L695.7 333.7L697.5 334.4L699.5 334.9L701.5 335.3L703.6 335.6L705.8 335.8L708.0 335.9L710.2 335.9L712.5 335.7L714.9 335.5L717.3 335.1L719.7 334.7L722.0 334.2L724.4 333.6L726.9 332.9L729.3 332.1L731.7 331.3L733.9 330.4L736.0 329.6L738.0 328.7L740.0 327.7L741.8 326.7L743.5 325.8L744.8 325.0L745.8 324.4ZM764.3 309.5L763.7 310.3L763.0 311.4L762.1 312.6L761.1 314.0L759.9 315.5L758.6 316.9L757.2 318.4L755.6 320.0L753.9 321.7L752.1 323.4L750.3 325.1L748.4 326.9L746.5 328.7L744.4 330.6L742.3 332.6L740.1 334.6L738.0 336.6L736.1 338.5L734.3 340.5L732.6 342.6L730.9 344.6L729.4 346.5L728.0 348.3L726.9 349.7L726.2 350.9L725.6 351.7L725.2 352.5L725.0 353.1L724.8 353.7L724.8 354.4L725.0 355.0L725.5 355.5L726.1 355.8L726.8 356.0L727.5 356.1L728.4 356.0L729.3 355.9L730.4 355.7L731.5 355.5L732.9 355.1L734.4 354.4L736.1 353.6L738.0 352.5L740.1 351.2L742.4 349.7L744.8 348.0L747.4 346.2L750.1 344.3L752.9 342.2L756.0 339.8L759.2 337.4L762.4 334.9L765.5 332.5L768.6 330.4L771.6 328.5L774.8 326.5L778.0 324.7L780.9 323.1L783.4 321.7L785.2 320.7L784.5 319.5L782.7 320.5L780.2 321.8L777.3 323.5L774.1 325.3L770.8 327.2L767.7 329.2L764.7 331.4L761.5 333.7L758.3 336.2L755.1 338.7L752.0 341.0L749.2 343.1L746.6 345.0L744.0 346.8L741.6 348.5L739.3 350.0L737.3 351.3L735.4 352.3L733.8 353.1L732.4 353.7L731.2 354.1L730.1 354.3L729.1 354.4L728.3 354.6L727.5 354.6L727.0 354.6L726.6 354.5L726.3 354.4L726.3 354.3L726.3 354.3L726.4 354.3L726.6 354.3L727.0 354.2L727.7 353.8L728.6 353.3L729.7 352.5L731.1 351.4L732.9 350.1L734.8 348.5L736.9 346.9L738.9 345.1L740.9 343.3L742.9 341.5L744.9 339.5L746.9 337.3L749.0 335.2L750.9 333.0L752.7 330.9L754.3 328.8L755.9 326.6L757.3 324.5L758.6 322.4L759.9 320.5L761.0 318.6L762.0 316.9L763.0 315.2L763.8 313.7L764.5 312.3L765.1 311.1L765.5 310.3ZM784.3 319.6L783.4 320.4L782.2 321.5L780.7 322.8L779.1 324.3L777.5 325.8L775.8 327.4L774.0 329.1L772.1 331.0L770.0 333.0L768.0 335.0L766.0 337.0L764.2 338.9L762.4 340.8L760.7 342.9L759.0 344.9L757.4 346.8L756.0 348.5L754.9 349.9L754.1 350.9L753.6 351.7L753.2 352.2L752.9 352.7L752.7 353.2L752.6 353.7L752.6 354.3L752.8 354.9L753.3 355.3L753.8 355.6L754.5 355.7L755.2 355.7L756.0 355.6L756.9 355.5L758.0 355.3L759.2 355.0L760.6 354.4L762.1 353.6L763.6 352.5L765.4 351.2L767.2 349.7L769.2 348.0L771.2 346.2L773.3 344.2L775.5 342.0L777.7 339.5L780.1 336.8L782.5 334.2L784.8 331.7L787.2 329.4L789.5 327.4L791.8 325.5L794.2 323.7L796.5 322.1L798.8 320.6L800.9 319.3L802.9 318.2L804.8 317.3L806.7 316.5L808.5 315.9L810.2 315.3L811.9 314.8L813.5 314.3L815.2 314.0L816.9 313.8L818.4 313.6L819.7 313.5L820.6 313.4L820.5 312.0L819.5 312.1L818.3 312.2L816.7 312.4L815.0 312.6L813.2 312.9L811.5 313.4L809.8 313.9L808.0 314.5L806.2 315.2L804.2 316.0L802.3 316.9L800.2 318.1L798.0 319.4L795.7 320.9L793.4 322.6L791.0 324.4L788.5 326.3L786.2 328.4L783.8 330.6L781.4 333.2L779.0 335.9L776.7 338.5L774.4 341.0L772.3 343.2L770.2 345.1L768.2 346.9L766.3 348.6L764.5 350.0L762.8 351.3L761.3 352.3L759.9 353.1L758.7 353.6L757.7 353.9L756.7 354.1L755.9 354.2L755.1 354.3L754.6 354.3L754.3 354.2L754.1 354.1L754.0 354.1L754.0 354.1L754.0 354.0L754.2 354.0L754.3 354.0L754.7 353.9L755.3 353.6L756.2 353.1L757.3 352.3L758.7 351.2L760.4 349.9L762.4 348.3L764.4 346.6L766.5 344.8L768.4 342.9L770.3 341.0L772.1 338.9L774.0 336.7L775.8 334.5L777.5 332.3L779.0 330.3L780.4 328.4L781.7 326.5L782.9 324.6L783.9 323.0L784.7 321.6L785.4 320.6ZM790.3 352.2L791.1 351.7L792.3 351.1L793.6 350.3L795.1 349.4L796.7 348.5L798.2 347.6L799.7 346.5L801.4 345.4L803.1 344.2L804.8 343.1L806.3 342.0L807.5 341.0L808.4 340.2L809.2 339.5L809.8 338.8L810.3 338.1L810.5 337.4L810.5 336.6L810.2 335.9L809.7 335.3L808.9 334.8L808.1 334.4L807.1 334.2L806.0 334.2L804.9 334.4L803.6 334.7L802.3 335.1L800.9 335.7L799.4 336.4L798.0 337.1L796.6 338.0L795.1 339.0L793.5 340.1L792.1 341.3L790.7 342.5L789.6 343.7L788.6 345.0L787.9 346.3L787.2 347.6L786.8 348.9L786.5 350.2L786.4 351.4L786.5 352.5L786.9 353.5L787.6 354.3L788.4 354.9L789.3 355.3L790.2 355.5L791.2 355.7L792.3 355.7L793.6 355.7L795.0 355.4L796.5 355.1L798.0 354.6L799.7 353.8L801.6 352.9L803.6 351.9L805.6 350.7L807.5 349.6L809.3 348.5L811.0 347.3L812.9 346.1L814.6 344.8L816.2 343.7L817.6 342.7L818.6 342.0L817.7 340.8L816.7 341.5L815.4 342.5L813.8 343.7L812.0 344.9L810.2 346.1L808.5 347.3L806.7 348.3L804.8 349.5L802.9 350.6L800.9 351.6L799.1 352.5L797.5 353.2L796.1 353.7L794.7 354.0L793.4 354.2L792.3 354.3L791.3 354.2L790.5 354.1L790.0 353.8L789.7 353.4L789.5 353.0L789.5 352.6L789.6 352.2L789.7 351.7L790.0 351.2L790.4 350.4L790.9 349.5L791.6 348.5L792.3 347.5L793.0 346.5L793.9 345.3L794.9 344.0L795.9 342.7L797.1 341.4L798.3 340.2L799.4 339.1L800.5 338.3L801.8 337.5L803.0 336.8L804.2 336.3L805.3 335.9L806.2 335.6L806.9 335.6L807.6 335.8L808.2 336.0L808.7 336.4L809.0 336.7L809.1 336.9L809.1 337.1L809.0 337.4L808.7 337.9L808.2 338.5L807.5 339.1L806.6 339.9L805.4 340.8L804.0 341.9L802.3 343.0L800.6 344.2L798.9 345.3L797.4 346.3L795.9 347.3L794.4 348.2L792.9 349.0L791.5 349.8L790.4 350.5L789.5 350.9ZM812.6 349.9L814.3 348.9L816.6 347.5L819.3 345.8L822.2 344.0L825.0 342.3L827.5 340.6L829.5 339.1L831.5 337.6L833.3 336.2L835.1 334.6L836.8 333.0L838.7 331.2L840.6 329.2L842.4 327.0L844.3 324.6L846.2 322.3L848.0 320.2L849.8 318.3L851.5 316.6L853.3 315.1L855.1 313.7L856.8 312.5L858.4 311.4L859.8 310.5L861.0 309.9L862.1 309.4L863.1 309.1L863.9 309.0L864.5 309.0L864.8 309.2L865.1 309.3L865.3 309.7L865.4 310.2L865.4 311.0L865.2 311.8L864.8 312.8L864.1 314.0L863.2 315.4L862.1 316.9L860.8 318.5L859.4 320.2L857.9 321.8L856.2 323.4L854.4 325.1L852.4 326.7L850.3 328.5L848.2 330.3L846.0 332.1L843.8 334.2L841.5 336.4L839.2 338.7L836.9 340.9L834.8 343.0L832.9 344.7L831.2 346.2L829.7 347.6L828.2 348.9L826.8 350.1L825.6 351.1L824.6 351.9L823.7 352.5L823.1 352.9L822.6 353.2L822.1 353.3L821.7 353.5L821.2 354.2L821.4 355.0L821.9 355.4L822.5 355.7L823.2 355.9L824.0 355.9L824.9 355.7L825.9 355.3L827.0 354.8L828.2 354.1L829.5 353.4L830.8 352.6L832.1 351.7L833.5 350.7L835.1 349.5L836.7 348.2L838.2 347.0L839.5 345.9L840.5 345.2L839.5 344.1L838.6 344.8L837.3 345.8L835.8 347.1L834.2 348.3L832.6 349.5L831.3 350.5L830.0 351.4L828.7 352.1L827.5 352.9L826.3 353.5L825.3 354.0L824.5 354.3L823.9 354.4L823.4 354.4L822.9 354.3L822.7 354.2L822.6 354.1L822.7 354.5L822.4 354.9L822.6 354.9L823.1 354.9L823.8 354.8L824.7 354.5L825.8 354.0L827.1 353.4L828.5 352.8L830.2 352.0L832.1 351.0L834.0 349.7L836.0 348.2L838.0 346.4L840.2 344.2L842.4 341.9L844.7 339.5L846.8 337.1L848.8 334.9L850.7 332.8L852.5 330.8L854.3 328.7L856.0 326.7L857.7 324.8L859.2 323.0L860.6 321.2L862.0 319.5L863.3 317.8L864.4 316.2L865.4 314.8L866.1 313.5L866.6 312.3L866.8 311.1L866.8 310.1L866.6 309.2L866.2 308.4L865.5 307.9L864.7 307.6L863.8 307.6L862.8 307.7L861.6 308.1L860.4 308.6L859.1 309.3L857.6 310.2L856.0 311.3L854.2 312.5L852.4 314.0L850.6 315.6L848.7 317.3L846.9 319.2L845.1 321.4L843.2 323.7L841.3 326.0L839.5 328.3L837.6 330.2L835.8 332.0L834.1 333.6L832.4 335.0L830.6 336.5L828.7 337.9L826.6 339.4L824.2 341.0L821.4 342.8L818.6 344.6L815.8 346.2L813.5 347.6L811.8 348.6ZM869.0 336.1L868.4 335.9L867.6 335.5L866.6 335.1L865.5 334.7L864.3 334.5L863.0 334.7L861.7 335.0L860.4 335.6L859.0 336.3L857.5 337.1L856.2 338.0L854.8 339.0L853.5 340.0L852.2 341.2L850.8 342.5L849.6 343.8L848.4 345.1L847.5 346.3L846.8 347.5L846.3 348.7L846.0 349.9L845.8 351.1L845.8 352.2L846.0 353.3L846.5 354.3L847.3 354.9L848.2 355.4L849.2 355.6L850.2 355.6L851.2 355.5L852.3 355.4L853.4 355.1L854.7 354.6L856.1 354.1L857.5 353.4L858.9 352.7L860.5 351.7L862.2 350.5L864.0 349.2L865.7 348.0L867.2 346.9L868.2 346.1L867.4 345.0L866.3 345.7L864.9 346.8L863.2 348.0L861.4 349.3L859.7 350.5L858.2 351.4L856.8 352.1L855.5 352.7L854.2 353.3L853.0 353.7L852.0 354.0L851.1 354.1L850.3 354.0L849.6 353.8L849.2 353.5L848.9 353.1L848.8 352.8L848.8 352.6L848.9 352.3L849.1 351.8L849.4 351.1L849.9 350.3L850.4 349.5L851.0 348.5L851.7 347.4L852.5 346.2L853.5 344.8L854.5 343.5L855.6 342.2L856.6 341.0L857.7 340.0L858.9 338.9L860.0 338.0L861.2 337.1L862.3 336.5L863.3 336.1L864.2 336.0L865.2 336.1L866.1 336.5L867.0 336.8L867.8 337.2L868.4 337.4ZM894.7 335.6L894.0 335.5L893.0 335.4L891.9 335.2L890.5 335.2L889.2 335.3L887.9 335.6L886.6 336.2L885.3 336.9L883.9 337.8L882.6 338.8L881.4 339.9L880.4 341.1L879.6 342.3L878.9 343.7L878.4 345.2L878.0 346.7L877.9 348.1L877.9 349.4L878.2 350.7L878.7 351.9L879.5 352.9L880.3 353.7L881.2 354.3L882.2 354.8L883.2 355.0L884.2 355.0L885.3 354.8L886.3 354.5L887.4 354.1L888.5 353.6L889.6 352.9L890.8 352.1L891.9 351.1L893.1 350.1L894.2 349.0L895.2 347.9L896.2 346.7L897.2 345.4L898.1 344.1L899.0 342.7L899.7 341.4L900.1 340.2L900.2 339.0L900.0 337.9L899.5 337.0L899.0 336.3L898.4 335.7L897.8 335.2L897.0 334.9L896.2 334.9L895.5 335.1L894.8 335.3L894.3 335.5L894.0 335.6L894.4 337.0L894.8 336.9L895.3 336.7L895.9 336.5L896.4 336.4L896.8 336.4L897.0 336.5L897.4 336.8L897.8 337.2L898.1 337.8L898.4 338.5L898.5 339.1L898.4 339.8L898.1 340.7L897.5 341.9L896.8 343.2L895.9 344.5L895.0 345.8L894.1 346.9L893.1 348.0L892.1 349.0L891.0 350.0L889.9 350.9L888.8 351.7L887.8 352.3L886.8 352.8L885.9 353.1L885.0 353.3L884.2 353.3L883.5 353.2L883.0 353.0L882.6 352.6L882.3 352.0L882.0 351.3L881.9 350.6L881.8 349.8L881.8 349.1L881.8 348.2L881.8 347.2L881.9 346.0L882.1 344.8L882.5 343.7L882.9 342.6L883.5 341.6L884.3 340.5L885.3 339.4L886.4 338.4L887.4 337.6L888.4 337.0L889.4 336.7L890.6 336.6L891.7 336.7L892.9 336.8L893.8 337.0L894.6 337.0ZM895.5 345.8L896.3 345.9L897.4 346.1L898.7 346.3L900.2 346.4L901.7 346.4L903.1 346.3L904.5 345.8L906.0 345.1L907.5 344.4L908.8 343.6L909.9 342.9L910.7 342.5L910.0 341.2L909.2 341.7L908.1 342.3L906.8 343.1L905.4 343.8L904.0 344.5L902.8 344.8L901.6 345.0L900.3 345.0L898.9 344.8L897.6 344.6L896.5 344.5L895.6 344.4ZM915.9 344.3L916.8 343.8L918.1 343.1L919.6 342.3L921.2 341.4L922.8 340.5L924.3 339.7L925.6 338.9L927.1 338.0L928.5 337.1L929.8 336.3L930.9 335.6L931.7 335.1L930.9 333.8L930.1 334.3L929.0 335.0L927.7 335.9L926.3 336.7L924.9 337.6L923.5 338.4L922.1 339.3L920.5 340.2L918.9 341.0L917.4 341.9L916.1 342.6L915.2 343.1ZM930.9 334.0L930.0 334.9L928.7 336.1L927.3 337.6L925.6 339.2L924.0 340.8L922.5 342.4L920.8 344.1L919.0 346.1L917.1 348.1L915.3 350.0L913.8 351.7L912.7 352.8L914.7 354.9L915.9 353.9L917.6 352.4L919.6 350.6L921.6 348.7L923.6 346.8L925.3 345.0L926.8 343.2L928.1 341.2L929.4 339.3L930.5 337.5L931.4 336.0L932.0 334.9ZM915.9 353.6L917.9 352.3L920.7 350.5L924.0 348.4L927.5 346.2L930.8 344.2L933.5 342.5L935.8 341.1L938.0 339.8L940.0 338.6L941.8 337.6L943.3 336.8L944.6 336.2L945.6 335.8L946.4 335.5L946.8 335.4L946.7 335.3L946.5 335.0L946.4 335.3L945.8 336.0L944.9 337.0L943.6 338.2L942.2 339.5L940.7 340.9L939.2 342.3L937.4 343.9L935.3 345.9L933.0 347.9L930.8 349.9L928.9 351.6L927.6 352.8L929.4 355.0L930.9 353.9L932.9 352.5L935.3 350.7L937.7 348.8L940.0 346.9L941.9 345.1L943.4 343.4L944.7 341.6L945.8 339.8L946.7 338.2L947.3 336.9L947.7 335.9L947.9 335.1L947.6 334.1L946.7 333.9L945.9 334.1L945.0 334.4L944.0 334.9L942.6 335.5L941.1 336.4L939.3 337.4L937.3 338.5L935.1 339.8L932.8 341.2L930.0 342.9L926.7 345.0L923.3 347.2L920.0 349.3L917.2 351.1L915.2 352.4ZM930.7 353.6L932.8 352.3L935.8 350.5L939.3 348.4L943.0 346.2L946.4 344.2L949.3 342.5L951.6 341.1L953.8 339.8L955.8 338.6L957.6 337.6L959.1 336.8L960.3 336.2L961.2 335.9L961.7 335.8L961.7 335.8L961.6 335.6L961.5 335.7L961.3 336.1L960.8 336.8L959.8 337.7L958.7 338.8L957.3 340.0L956.0 341.2L954.8 342.3L953.6 343.5L952.3 344.8L950.9 346.2L949.6 347.5L948.5 348.7L947.5 349.7L946.9 350.5L946.3 351.2L945.9 351.8L945.5 352.4L945.2 353.1L945.1 353.9L945.4 354.6L945.9 355.1L946.6 355.5L947.3 355.7L948.1 355.7L949.1 355.5L950.1 355.2L951.2 354.7L952.5 354.1L953.9 353.4L955.3 352.6L956.7 351.7L958.2 350.7L960.0 349.5L961.8 348.2L963.5 347.0L965.0 346.0L966.0 345.2L965.1 344.0L964.1 344.8L962.7 345.8L961.0 347.0L959.2 348.3L957.4 349.5L955.9 350.5L954.5 351.3L953.2 352.1L951.9 352.8L950.6 353.4L949.6 353.8L948.7 354.1L948.0 354.2L947.5 354.2L947.2 354.0L947.0 353.9L947.0 353.8L947.1 353.9L947.2 354.1L947.4 354.2L947.8 354.0L948.5 353.7L949.3 353.2L950.2 352.5L951.3 351.6L952.5 350.5L953.9 349.2L955.3 347.8L956.6 346.4L957.8 345.1L958.9 343.7L959.9 342.1L960.9 340.6L961.7 339.1L962.3 337.8L962.7 336.8L963.0 336.0L963.0 335.3L962.4 334.5L961.6 334.4L960.8 334.5L959.7 334.9L958.4 335.5L956.9 336.3L955.1 337.3L953.1 338.5L950.9 339.8L948.5 341.2L945.6 342.9L942.2 345.0L938.6 347.2L935.1 349.3L932.1 351.1L930.0 352.3ZM974.2 352.7L975.1 352.2L976.4 351.5L977.8 350.8L979.4 349.9L981.1 349.0L982.6 348.0L984.2 347.0L985.9 345.9L987.6 344.7L989.2 343.6L990.7 342.5L991.9 341.5L993.0 340.6L993.9 339.8L994.7 339.0L995.4 338.3L995.8 337.5L995.9 336.6L995.5 335.8L994.7 335.3L993.8 334.9L992.7 334.6L991.6 334.6L990.4 334.7L989.2 334.9L988.0 335.4L986.6 335.9L985.2 336.6L983.8 337.3L982.5 338.1L981.1 338.9L979.6 339.9L978.1 340.9L976.6 342.0L975.3 343.1L974.2 344.3L973.3 345.5L972.5 346.7L972.0 348.0L971.6 349.2L971.4 350.4L971.4 351.6L971.7 352.7L972.2 353.6L972.9 354.3L973.7 354.9L974.6 355.3L975.6 355.5L976.6 355.7L977.8 355.7L979.1 355.7L980.4 355.5L981.9 355.1L983.4 354.6L985.1 353.7L986.9 352.7L988.8 351.4L990.7 350.2L992.3 349.0L993.8 348.0L994.9 347.2L995.9 346.4L996.8 345.7L997.4 345.1L998.0 344.6L998.4 344.3L997.5 343.1L997.1 343.5L996.5 344.0L995.8 344.6L995.0 345.3L994.0 346.0L992.9 346.8L991.5 347.8L989.8 349.0L988.0 350.2L986.2 351.4L984.4 352.5L982.9 353.2L981.5 353.7L980.2 354.1L978.9 354.2L977.8 354.3L976.7 354.2L975.9 354.1L975.3 353.8L974.8 353.4L974.6 352.9L974.4 352.4L974.4 352.0L974.5 351.6L974.7 351.1L975.0 350.4L975.4 349.6L976.0 348.7L976.6 347.8L977.3 346.9L978.1 345.8L979.1 344.7L980.3 343.4L981.5 342.2L982.7 341.1L983.8 340.1L985.0 339.2L986.2 338.3L987.4 337.5L988.6 336.9L989.7 336.4L990.7 336.1L991.6 336.0L992.5 336.1L993.3 336.3L994.0 336.5L994.4 336.8L994.5 336.9L994.4 337.0L994.2 337.4L993.7 338.0L992.9 338.7L992.0 339.5L991.0 340.4L989.8 341.3L988.3 342.4L986.7 343.5L985.0 344.7L983.4 345.8L981.8 346.8L980.3 347.7L978.7 348.6L977.1 349.5L975.7 350.3L974.4 350.9L973.5 351.4ZM1120.9 307.9L1121.2 307.5L1121.6 306.7L1122.2 305.9L1122.6 304.9L1122.9 303.8L1122.8 302.7L1122.3 301.8L1121.6 301.0L1120.7 300.2L1119.7 299.5L1118.5 298.8L1117.3 298.3L1116.0 297.9L1114.5 297.6L1113.0 297.3L1111.3 297.1L1109.6 297.1L1107.8 297.1L1105.8 297.1L1103.7 297.2L1101.4 297.4L1099.2 297.7L1096.9 298.2L1094.6 298.8L1092.4 299.5L1090.1 300.4L1087.9 301.4L1085.7 302.5L1083.5 303.8L1081.4 305.1L1079.4 306.6L1077.5 308.2L1075.6 309.9L1073.7 311.7L1071.9 313.6L1070.2 315.4L1068.5 317.4L1066.9 319.3L1065.2 321.4L1063.7 323.5L1062.2 325.5L1060.9 327.6L1059.6 329.5L1058.4 331.5L1057.2 333.4L1056.1 335.3L1055.0 337.3L1053.7 339.3L1052.3 341.5L1050.9 343.8L1049.5 346.1L1048.1 348.3L1046.6 350.4L1045.2 352.2L1043.7 354.0L1042.2 355.6L1040.7 357.1L1039.2 358.6L1037.6 360.0L1036.1 361.4L1034.5 362.8L1032.9 364.1L1031.3 365.3L1029.6 366.6L1027.8 367.8L1025.9 369.0L1023.9 370.2L1021.8 371.4L1019.6 372.6L1017.4 373.7L1015.2 374.8L1012.9 375.6L1010.6 376.4L1008.2 377.1L1005.8 377.6L1003.4 378.0L1001.3 378.3L999.5 378.4L998.0 378.1L996.7 377.8L995.7 377.3L994.8 376.7L994.1 376.0L993.6 375.3L993.2 374.5L993.0 373.7L992.9 372.8L993.1 371.8L993.4 370.8L994.0 369.5L995.0 368.1L996.2 366.6L997.7 364.9L999.4 363.2L1001.2 361.6L1003.0 360.0L1005.0 358.5L1007.3 357.1L1009.6 355.6L1012.0 354.3L1014.4 353.0L1016.8 351.8L1019.1 350.6L1021.4 349.6L1023.7 348.6L1026.0 347.7L1028.3 347.0L1030.6 346.3L1032.9 345.7L1035.1 345.2L1037.4 344.8L1039.8 344.5L1042.1 344.2L1044.3 344.0L1046.6 343.7L1048.9 343.4L1051.2 343.2L1053.4 343.0L1055.6 342.9L1057.8 342.9L1060.0 342.9L1062.3 343.1L1064.6 343.3L1066.7 343.6L1068.4 343.8L1069.7 344.0L1069.9 342.5L1068.6 342.4L1066.8 342.2L1064.7 341.9L1062.4 341.7L1060.0 341.5L1057.8 341.4L1055.6 341.4L1053.3 341.6L1051.1 341.7L1048.8 342.0L1046.5 342.2L1044.2 342.5L1041.9 342.8L1039.6 343.1L1037.2 343.4L1034.9 343.8L1032.5 344.3L1030.2 344.9L1027.8 345.6L1025.5 346.4L1023.2 347.3L1020.8 348.3L1018.5 349.3L1016.2 350.5L1013.8 351.7L1011.3 353.0L1008.9 354.4L1006.5 355.8L1004.2 357.3L1002.1 358.9L1000.2 360.5L998.4 362.2L996.6 363.9L995.1 365.6L993.8 367.3L992.8 368.8L992.1 370.2L991.7 371.5L991.5 372.8L991.6 373.9L991.9 375.0L992.3 376.0L993.0 376.9L993.9 377.8L994.9 378.5L996.2 379.1L997.7 379.6L999.4 379.8L1001.4 379.9L1003.6 379.8L1006.1 379.6L1008.6 379.3L1011.2 378.9L1013.7 378.4L1016.2 377.9L1018.7 377.3L1021.3 376.6L1023.8 375.8L1026.2 374.9L1028.5 374.0L1030.7 373.0L1032.8 371.9L1034.9 370.8L1036.9 369.6L1038.8 368.2L1040.6 366.7L1042.4 365.1L1044.1 363.4L1045.7 361.6L1047.2 359.7L1048.6 357.7L1050.0 355.5L1051.3 353.2L1052.4 350.6L1053.4 348.0L1054.4 345.5L1055.3 343.0L1056.3 340.7L1057.2 338.5L1058.1 336.4L1059.0 334.3L1059.9 332.3L1060.9 330.4L1062.1 328.4L1063.4 326.3L1064.9 324.3L1066.4 322.3L1068.0 320.3L1069.6 318.3L1071.3 316.4L1073.0 314.6L1074.8 312.8L1076.6 311.0L1078.4 309.3L1080.3 307.8L1082.3 306.3L1084.3 305.0L1086.4 303.8L1088.5 302.7L1090.7 301.7L1092.9 300.9L1095.0 300.1L1097.2 299.6L1099.4 299.2L1101.6 298.9L1103.8 298.7L1105.9 298.6L1107.8 298.5L1109.6 298.5L1111.2 298.6L1112.8 298.7L1114.3 299.0L1115.6 299.3L1116.8 299.7L1117.9 300.1L1118.9 300.7L1119.8 301.3L1120.6 302.0L1121.1 302.6L1121.4 303.2L1121.5 303.7L1121.3 304.4L1120.9 305.2L1120.4 306.0L1119.9 306.7L1119.6 307.2ZM1090.5 334.0L1089.8 334.7L1088.8 335.7L1087.7 336.8L1086.4 338.0L1085.2 339.3L1084.0 340.6L1082.8 341.9L1081.5 343.3L1080.1 344.8L1078.8 346.3L1077.6 347.6L1076.7 348.8L1075.9 349.7L1075.3 350.6L1074.7 351.4L1074.2 352.1L1073.8 352.8L1073.5 353.6L1073.6 354.5L1074.0 355.1L1074.6 355.5L1075.3 355.7L1076.1 355.7L1077.0 355.5L1077.9 355.2L1079.0 354.7L1080.1 354.1L1081.4 353.4L1082.7 352.6L1084.1 351.7L1085.7 350.6L1087.4 349.2L1089.2 347.7L1090.9 346.3L1092.4 345.1L1093.4 344.3L1092.5 343.1L1091.5 344.0L1090.0 345.2L1088.3 346.6L1086.5 348.1L1084.8 349.4L1083.3 350.5L1082.0 351.4L1080.7 352.2L1079.5 352.8L1078.3 353.4L1077.4 353.8L1076.6 354.1L1076.0 354.2L1075.5 354.2L1075.3 354.1L1075.2 354.0L1075.3 354.1L1075.4 354.2L1075.6 354.2L1076.0 354.0L1076.7 353.6L1077.6 353.2L1078.6 352.5L1079.6 351.6L1080.8 350.5L1082.0 349.2L1083.4 347.7L1084.7 346.2L1086.0 344.6L1087.1 343.1L1088.1 341.6L1089.1 340.0L1089.9 338.5L1090.7 337.0L1091.3 335.8L1091.7 334.9ZM1096.3 328.5L1097.0 328.2L1097.9 327.8L1099.0 327.3L1100.1 326.9L1101.1 326.4L1101.7 326.2L1100.9 324.2L1100.2 324.5L1099.3 324.9L1098.2 325.4L1097.1 325.8L1096.1 326.2L1095.5 326.5ZM1126.4 335.6L1125.6 335.4L1124.5 335.2L1123.2 334.9L1121.7 334.7L1120.2 334.5L1118.8 334.7L1117.4 334.9L1116.0 335.3L1114.7 335.8L1113.3 336.4L1111.9 337.2L1110.6 338.0L1109.3 339.0L1107.9 340.2L1106.6 341.5L1105.3 342.9L1104.2 344.2L1103.4 345.4L1102.7 346.6L1102.2 347.9L1101.8 349.1L1101.7 350.3L1101.7 351.4L1102.0 352.5L1102.7 353.4L1103.6 353.9L1104.6 354.2L1105.7 354.3L1106.8 354.3L1107.9 354.1L1109.0 353.9L1110.2 353.5L1111.5 353.0L1112.9 352.4L1114.2 351.6L1115.6 350.8L1117.0 349.8L1118.4 348.6L1119.8 347.2L1121.3 345.9L1122.7 344.6L1124.0 343.3L1125.4 342.0L1126.8 340.7L1128.2 339.4L1129.5 338.1L1130.6 337.1L1131.4 336.4L1130.4 335.3L1129.6 336.1L1128.5 337.1L1127.2 338.3L1125.8 339.6L1124.4 341.0L1123.0 342.2L1121.7 343.5L1120.3 344.8L1118.9 346.2L1117.5 347.5L1116.1 348.6L1114.8 349.6L1113.5 350.4L1112.2 351.1L1111.0 351.7L1109.8 352.2L1108.7 352.5L1107.7 352.7L1106.8 352.7L1105.9 352.6L1105.1 352.4L1104.6 352.1L1104.3 351.8L1104.3 351.6L1104.4 351.3L1104.6 350.9L1104.9 350.2L1105.4 349.4L1106.0 348.5L1106.6 347.5L1107.4 346.4L1108.2 345.2L1109.2 343.8L1110.3 342.4L1111.3 341.2L1112.3 340.1L1113.4 339.2L1114.5 338.4L1115.6 337.6L1116.7 337.0L1117.9 336.4L1119.0 336.1L1120.2 336.0L1121.5 336.1L1122.9 336.3L1124.2 336.6L1125.3 336.9L1126.2 337.0ZM1133.0 334.0L1132.4 334.7L1131.6 335.7L1130.6 336.8L1129.6 338.0L1128.5 339.3L1127.4 340.7L1126.3 342.2L1125.1 343.8L1123.9 345.5L1122.7 347.3L1121.4 349.0L1120.1 350.8L1118.7 352.5L1117.4 354.3L1116.0 356.2L1114.5 358.0L1113.0 359.7L1111.6 361.3L1110.0 362.8L1108.5 364.2L1106.9 365.5L1105.3 366.8L1103.6 367.9L1101.9 369.0L1100.0 369.9L1098.0 370.7L1095.9 371.5L1093.8 372.1L1091.8 372.7L1090.0 373.1L1088.4 373.4L1086.9 373.6L1085.4 373.8L1084.1 373.8L1083.0 373.7L1082.0 373.6L1081.2 373.3L1080.5 372.9L1079.9 372.4L1079.5 372.0L1079.3 371.5L1079.3 371.2L1079.5 370.7L1080.0 370.1L1080.7 369.4L1081.7 368.6L1082.8 367.8L1084.1 367.0L1085.5 366.2L1087.2 365.3L1089.1 364.4L1091.1 363.5L1093.1 362.7L1095.1 362.0L1097.0 361.3L1099.0 360.7L1101.0 360.1L1103.0 359.6L1105.0 359.1L1107.0 358.8L1108.9 358.5L1110.9 358.3L1112.9 358.2L1114.7 358.1L1116.4 358.1L1117.9 358.1L1119.2 358.3L1120.2 358.5L1121.2 358.8L1122.0 359.2L1122.7 359.5L1123.3 359.7L1123.8 358.3L1123.2 358.1L1122.6 357.8L1121.7 357.5L1120.6 357.1L1119.4 356.8L1118.0 356.7L1116.5 356.6L1114.7 356.6L1112.8 356.7L1110.8 356.8L1108.7 357.1L1106.7 357.3L1104.7 357.7L1102.7 358.2L1100.6 358.7L1098.6 359.3L1096.6 359.9L1094.6 360.6L1092.6 361.4L1090.5 362.2L1088.5 363.1L1086.6 364.0L1084.9 364.9L1083.3 365.8L1082.0 366.6L1080.8 367.4L1079.8 368.3L1078.9 369.1L1078.3 370.0L1077.9 370.9L1077.9 371.8L1078.3 372.7L1078.9 373.5L1079.7 374.1L1080.6 374.6L1081.7 375.0L1082.8 375.2L1084.1 375.2L1085.5 375.2L1087.0 375.1L1088.6 374.8L1090.3 374.5L1092.2 374.1L1094.2 373.5L1096.3 372.8L1098.5 372.1L1100.6 371.2L1102.6 370.3L1104.4 369.3L1106.3 368.2L1108.1 367.1L1109.8 365.8L1111.5 364.5L1113.3 363.2L1115.0 361.7L1116.7 360.1L1118.5 358.4L1120.1 356.7L1121.7 355.0L1123.3 353.3L1124.7 351.6L1126.1 349.8L1127.4 348.0L1128.7 346.3L1129.8 344.6L1130.8 343.0L1131.6 341.4L1132.4 339.8L1133.1 338.2L1133.6 336.9L1134.0 335.7L1134.4 334.8ZM1138.8 355.4L1139.9 354.4L1141.4 353.0L1143.2 351.4L1145.2 349.7L1147.1 347.9L1149.0 346.1L1151.0 344.2L1153.1 342.0L1155.2 339.8L1157.2 337.8L1158.9 336.0L1160.1 334.8L1159.1 333.8L1157.9 335.0L1156.2 336.8L1154.2 338.8L1152.0 341.0L1149.9 343.1L1148.0 345.0L1146.2 346.8L1144.2 348.6L1142.2 350.4L1140.5 351.9L1138.9 353.3L1137.8 354.3ZM1159.0 333.8L1158.3 334.6L1157.4 335.6L1156.2 336.8L1155.0 338.0L1153.7 339.4L1152.6 340.6L1151.4 341.9L1150.1 343.4L1148.7 344.9L1147.4 346.3L1146.3 347.7L1145.3 348.8L1144.5 349.8L1143.8 350.8L1143.2 351.6L1142.7 352.3L1142.3 352.9L1141.9 353.4L1143.1 354.7L1143.6 354.5L1144.2 354.1L1145.1 353.7L1146.0 353.1L1147.0 352.4L1148.1 351.5L1149.2 350.4L1150.5 349.1L1151.8 347.6L1153.2 346.1L1154.5 344.6L1155.6 343.1L1156.6 341.5L1157.5 339.9L1158.4 338.3L1159.1 336.8L1159.8 335.6L1160.2 334.7ZM1145.3 354.4L1146.7 353.0L1148.7 351.1L1151.1 348.8L1153.6 346.5L1156.1 344.3L1158.2 342.4L1160.2 340.9L1162.3 339.4L1164.2 338.1L1166.1 337.0L1167.8 336.0L1169.2 335.3L1170.3 334.8L1171.3 334.7L1172.0 334.6L1172.6 334.7L1173.3 334.9L1173.9 335.0L1174.5 335.0L1174.9 335.1L1175.1 335.1L1175.0 335.0L1175.0 334.9L1174.8 335.3L1174.3 336.0L1173.5 336.9L1172.5 338.0L1171.3 339.2L1170.2 340.4L1169.1 341.5L1168.1 342.7L1166.9 343.9L1165.7 345.2L1164.6 346.5L1163.6 347.8L1162.7 348.9L1162.1 349.8L1161.6 350.7L1161.1 351.5L1160.8 352.3L1160.6 353.0L1160.5 353.8L1160.7 354.5L1161.1 355.1L1161.7 355.5L1162.4 355.7L1163.2 355.7L1164.0 355.5L1164.9 355.2L1165.9 354.8L1167.1 354.2L1168.3 353.5L1169.7 352.7L1171.1 351.7L1172.9 350.5L1175.0 348.9L1177.2 347.3L1179.3 345.7L1181.0 344.3L1182.3 343.4L1181.4 342.2L1180.2 343.2L1178.4 344.5L1176.3 346.1L1174.1 347.8L1172.1 349.3L1170.3 350.5L1168.9 351.4L1167.6 352.2L1166.4 352.9L1165.3 353.4L1164.4 353.8L1163.6 354.1L1163.0 354.2L1162.6 354.2L1162.4 354.1L1162.3 354.0L1162.4 354.0L1162.4 354.0L1162.6 353.9L1163.0 353.7L1163.5 353.4L1164.2 352.9L1165.0 352.3L1165.8 351.5L1166.7 350.6L1167.8 349.4L1169.0 348.2L1170.2 346.8L1171.3 345.4L1172.3 344.0L1173.2 342.6L1174.1 341.1L1174.8 339.6L1175.5 338.1L1176.0 336.9L1176.3 335.8L1176.4 335.0L1176.3 334.3L1175.7 333.8L1175.1 333.6L1174.6 333.6L1174.1 333.5L1173.6 333.4L1172.9 333.3L1172.1 333.2L1171.1 333.2L1169.9 333.5L1168.6 334.0L1167.1 334.7L1165.3 335.7L1163.4 336.9L1161.4 338.2L1159.4 339.7L1157.3 341.3L1155.1 343.2L1152.6 345.4L1150.1 347.8L1147.7 350.1L1145.7 352.0L1144.3 353.4Z"/><ellipse cx="786.9" cy="226.0" rx="5.6" ry="3.1" transform="rotate(-28 786.9 226.0)"/><ellipse cx="781.0" cy="258.6" rx="1.7" ry="1.6" transform="rotate(0 781.0 258.6)"/><ellipse cx="815.1" cy="245.1" rx="1.8" ry="1.8" transform="rotate(0 815.1 245.1)"/><ellipse cx="884.7" cy="233.7" rx="2.3" ry="1.9" transform="rotate(-40 884.7 233.7)"/><ellipse cx="868.9" cy="337.4" rx="2.0" ry="1.7" transform="rotate(0 868.9 337.4)"/><ellipse cx="1115.2" cy="310.8" rx="7.2" ry="4.1" transform="rotate(-28 1115.2 310.8)"/></svg><!--TITLE_SVG_END-->
<!--EXTRAS_START--><!-- scrollbar -->
<div class="abs" style="left:1897px;top:174px;width:18px;height:876px;background:#3f3e40"></div>
<div class="abs" style="left:1917px;top:174px;width:3px;height:876px;background:#454446"></div>
<svg style="left:1898px;top:184px" width="14" height="10" viewBox="0 0 14 10"><path d="M7 0.4 L13.6 9.4 H0.4 Z" fill="#bdbdbd"/></svg>
<div class="abs" style="left:1900px;top:203px;width:11px;height:704px;border-radius:5.5px;background:#9d9c9f"></div>
<svg style="left:1899px;top:1028px" width="14" height="10" viewBox="0 0 14 10"><path d="M0.4 0.6 H13.2 L6.8 9.4 Z" fill="#c6c6c6"/></svg>
<!-- acrobat icon -->
<svg style="left:1851px;top:976px" width="30" height="32" viewBox="0 0 30 32"><rect x="0" y="0" width="30" height="32" rx="1.5" fill="#a3211f"/>
<path d="M13.6 5.6 Q15.4 5 15.2 8 Q14.8 12.4 12.4 17 Q9.4 22.6 6.2 24.4 Q4.4 25 4.8 23.4 Q6 20.6 11.6 18.4 Q17 16.4 21.6 16.6 Q24.8 17 24.2 18.6 Q23.2 19.8 20.6 18.8 Q16.6 16.6 14 11.2 Q12.6 7.2 13.6 5.6 Z" fill="none" stroke="#f3b8ae" stroke-width="1.5" stroke-linejoin="round"/></svg>
<!-- mouse cursor -->
<svg style="left:0;top:0" width="1920" height="1080" viewBox="0 0 1920 1080"><path d="M1382.6 639 L1382.6 652.2 L1385.5 649.6 L1387.7 654.6 L1389.9 653.6 L1387.7 648.8 L1391.8 648.6 Z" fill="#fff" stroke="#000" stroke-width="1" stroke-linejoin="round"/></svg>
<!-- left edge strip -->
<div class="abs" style="left:0;top:174px;width:4px;height:876px;background:#353436"></div>
<!--LOGO_START--><svg style="left:0;top:0" width="1920" height="1080" viewBox="0 0 1920 1080">
<g transform="translate(95,845) scale(0.10186)" fill="#d7bd7c" stroke="none">
<!-- ring (right side arc) -->
<path d="M545 132 C 800 110, 965 300, 962 520 C 960 760, 800 930, 600 935 C 520 932, 470 900, 440 860 L 470 840 C 510 890, 560 905, 610 900 C 790 890, 925 730, 925 520 C 925 330, 790 150, 550 165 Z"/>
<!-- top hair crescent -->
<path d="M300 225 C 400 165, 540 140, 640 175 C 690 215, 690 270, 660 300 C 560 262, 420 250, 290 262 C 270 250, 280 235, 300 225 Z"/>
<path d="M318 212 C 420 176, 520 168, 610 182 C 520 196, 430 212, 330 232 Z" fill="#3c3a3d"/>
<!-- laurel leaves -->
<g>
<ellipse cx="222" cy="300" rx="42" ry="17" transform="rotate(18 222 300)"/>
<ellipse cx="262" cy="352" rx="40" ry="17" transform="rotate(-28 262 352)"/>
<ellipse cx="300" cy="318" rx="36" ry="16" transform="rotate(30 300 318)"/>
<ellipse cx="330" cy="378" rx="38" ry="16" transform="rotate(-32 330 378)"/>
<ellipse cx="372" cy="332" rx="36" ry="16" transform="rotate(34 372 332)"/>
<ellipse cx="402" cy="398" rx="38" ry="16" transform="rotate(-36 402 398)"/>
<ellipse cx="442" cy="344" rx="36" ry="16" transform="rotate(36 442 344)"/>
<ellipse cx="478" cy="404" rx="38" ry="16" transform="rotate(-40 478 404)"/>
<ellipse cx="512" cy="346" rx="36" ry="16" transform="rotate(38 512 346)"/>
<ellipse cx="552" cy="396" rx="38" ry="16" transform="rotate(-44 552 396)"/>
<ellipse cx="582" cy="338" rx="34" ry="15" transform="rotate(40 582 338)"/>
<ellipse cx="622" cy="372" rx="34" ry="15" transform="rotate(-50 622 372)"/>
</g>
<!-- face -->
<path d="M748 262 C 782 292, 802 332, 814 380 C 822 410, 852 440, 864 470 C 864 490, 842 495, 844 510 C 857 530, 852 545, 848 560 C 864 585, 852 600, 834 614 C 802 630, 762 642, 722 662 C 682 692, 652 742, 642 812 C 612 782, 612 722, 642 672 C 692 602, 752 560, 758 470 C 762 390, 756 320, 748 262 Z"/>
<path d="M770 330 C 790 350, 800 380, 806 410 C 790 400, 776 370, 770 330 Z" fill="#3c3a3d" opacity="0.0"/>
<!-- long hair strand behind face (from top to bottom curl) -->
<path d="M660 180 C 720 230, 740 320, 735 420 C 730 520, 690 580, 640 640 C 590 700, 580 790, 640 850 C 600 850, 540 800, 545 720 C 550 640, 620 570, 660 500 C 700 420, 700 290, 660 180 Z"/>
<!-- middle strands -->
<path d="M700 420 C 660 520, 560 560, 480 600 C 430 625, 400 650, 385 690 C 400 620, 440 580, 500 550 C 580 510, 660 480, 700 420 Z"/>
<path d="M560 610 C 500 700, 470 780, 480 880 C 440 820, 440 730, 480 660 C 500 630, 530 615, 560 610 Z"/>
<path d="M470 640 C 400 660, 370 720, 360 790 C 350 830, 335 850, 320 870 C 300 800, 320 700, 380 650 C 410 630, 440 630, 470 640 Z"/>
<!-- left swoosh loop -->
<path d="M130 500 C 150 430, 230 400, 290 440 C 360 490, 380 560, 350 640 C 320 720, 300 790, 330 850 C 360 910, 420 945, 480 965 C 400 960, 300 920, 250 850 C 200 780, 210 700, 240 620 C 260 560, 260 480, 215 470 C 180 470, 165 520, 175 580 C 185 650, 215 720, 215 790 C 170 720, 115 600, 130 500 Z"/>
<path d="M300 460 C 345 500, 352 570, 330 630 C 300 710, 285 770, 300 830 C 270 770, 262 700, 285 630 C 305 570, 315 510, 300 460 Z" fill="#3c3a3d"/>
</g>
<!-- sparkles -->
<g fill="#8d8a7a" opacity="0.55"><circle cx="210" cy="890" r="0.8"/><circle cx="205" cy="867" r="0.7"/><circle cx="196" cy="925" r="0.7"/><circle cx="118" cy="945" r="0.7"/><circle cx="160" cy="953" r="0.8"/><circle cx="186" cy="948" r="0.6"/><circle cx="215" cy="912" r="0.6"/></g>
</svg>
<div class="t" id="brand" style="left:76px;top:966px;font-family:'Liberation Serif',serif;font-size:20.5px;letter-spacing:0px;color:#c9c5ab;opacity:.82;transform:scaleX(0.937);transform-origin:left top">BRIDALROYALES</div>
<div class="t" id="tagline" style="left:108px;top:994px;font-size:4.6px;font-weight:bold;letter-spacing:2.62px;color:#b5ad88;opacity:.75">FOR YOUR SPECIAL DAY</div>
<!--LOGO_END-->
<!--EXTRAS_END-->
</body>
</html>
